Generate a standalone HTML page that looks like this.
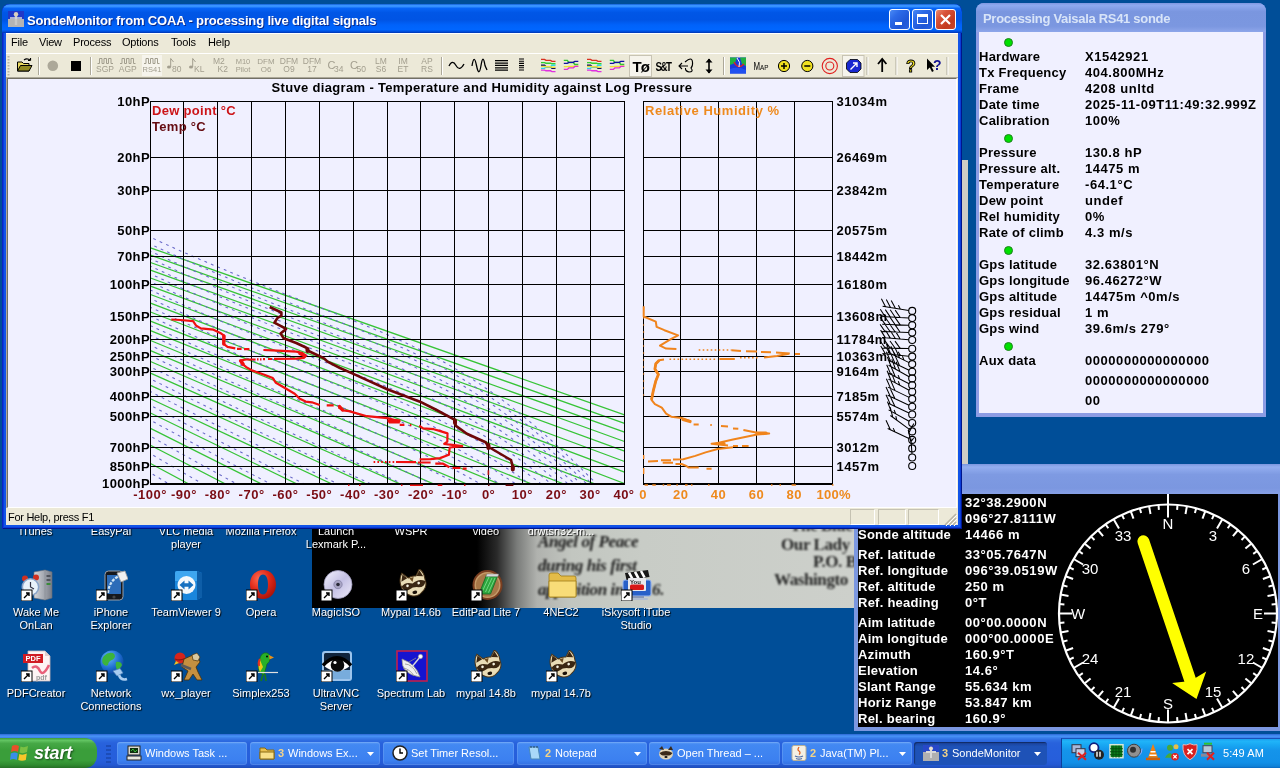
<!DOCTYPE html>
<html><head><meta charset="utf-8"><title>SondeMonitor</title>
<style>
*{box-sizing:border-box;margin:0;padding:0}
html,body{width:1280px;height:768px;overflow:hidden;background:#004e98;font-family:"Liberation Sans",sans-serif;}
.abs{position:absolute}
#desk{position:absolute;left:0;top:0;width:1280px;height:768px;overflow:hidden;background:#004e98;will-change:transform;-webkit-font-smoothing:antialiased}
.b13{font-weight:bold;font-size:13px;line-height:16px;white-space:nowrap}
/* main window */
#mw{position:absolute;left:2px;top:4px;width:960px;height:525px;background:#1254e8;border-radius:8px 8px 0 0;overflow:hidden;box-shadow:inset 1px 0 0 #0a26c2,inset -1px -1px 0 #00168c,inset 2px 0 0 #0a3cdc,inset -2px -2px 0 #0a3cd8}
#mw .tb{position:absolute;left:0;top:0;width:960px;height:29px;border-radius:8px 8px 0 0;
 background:linear-gradient(to bottom,#0a54cc 0%,#3a94ff 4%,#3490ff 9%,#0764f6 15%,#0056e6 30%,#0054e4 55%,#0062fa 72%,#0066ff 88%,#0052e2 94%,#0034b0 100%)}
#mw .ttl{position:absolute;left:25px;top:8px;color:#fff;font-weight:bold;font-size:13px;line-height:17px;white-space:nowrap;letter-spacing:-0.15px;text-shadow:1px 1px 0 #0a2a8c}
.cb{position:absolute;top:5px;width:21px;height:21px;border:1px solid #fff;border-radius:3px;
 background:linear-gradient(135deg,#4a8af5 0%,#2c6ae8 30%,#1f56d6 70%,#2a62e0 100%)}
.cb.x{background:linear-gradient(135deg,#ec8a6e 0%,#d9533a 30%,#c33a1f 70%,#c9462c 100%)}
#menu{position:absolute;left:4px;top:29px;width:952px;height:20px;background:#ece9d8;border-top:1px solid #fff;font-size:11px;line-height:14px}
#menu span{position:absolute;top:1px;color:#000;letter-spacing:-0.2px}
#tbar{position:absolute;left:4px;top:49px;width:952px;height:24px;background:#ece9d8;border-top:1px solid #fff}
#client{position:absolute;left:5px;top:74px;width:950px;height:430px;background:#f0f0ff;overflow:hidden;border:1px solid;border-color:#716f64 #fff #fff #716f64}
#cedge{position:absolute;left:4px;top:73px;width:952px;height:431px;background:#f1efe2;border-top:1px solid #aca899;border-left:1px solid #aca899}
#status{position:absolute;left:4px;top:504px;width:952px;height:17px;background:#ece9d8;font-size:11px;line-height:14px;letter-spacing:-0.28px}
/* right panel */
#rp{position:absolute;left:976px;top:3px;width:290px;height:414px;background:#8c9ce4;border-radius:8px 8px 0 0;overflow:hidden}
#rp .tb{position:absolute;left:0;top:0;width:290px;height:29px;background:linear-gradient(to bottom,#7f97e0 0%,#8faaf0 8%,#7a96df 30%,#7b97e0 80%,#8ea6ea 100%)}
#rp .ttl{position:absolute;left:7px;top:7px;color:#d8e4f8;font-weight:bold;font-size:13px;line-height:17px;white-space:nowrap;letter-spacing:-0.3px}
#rp .body{position:absolute;left:3px;top:29px;width:284px;height:381px;background:#f0f0ff}
.dot{position:absolute;width:9px;height:9px;border-radius:50%;background:#00e000;border:1px solid #208020}
/* compass window */
#cw{position:absolute;left:854px;top:464px;width:428px;height:267px;background:#7b97e0}
#cw .tb{position:absolute;left:0;top:0;width:440px;height:30px;background:linear-gradient(to bottom,#7a96df 0%,#93aef0 10%,#7e9ae2 35%,#7b97e0 80%,#86a0e6 100%)}
#cw .body{position:absolute;left:4px;top:30px;width:420px;height:233px;background:#000;overflow:hidden}
/* taskbar */
#task{position:absolute;left:0;top:734px;width:1280px;height:34px;
 background:linear-gradient(to bottom,#2a62cc 0px,#3c82ec 1px,#4690f4 2.5px,#3a7eea 4px,#2f6ee2 6px,#2862dc 9px,#2660dc 14px,#265edb 26px,#2358d2 31px,#1e4cb8 34px)}
.tbn{position:absolute;top:8px;height:23px;border-radius:3px;background:linear-gradient(to bottom,#5c9cf6 0%,#4288f2 12%,#3c80f0 80%,#3470e2 100%);box-shadow:inset 0 0 0 1px rgba(255,255,255,.12);color:#fff;font-size:11px;line-height:23px;white-space:nowrap;overflow:hidden}
.tbn.act{background:linear-gradient(to bottom,#183f96 0%,#1e52b7 20%,#1e52b7 100%);box-shadow:inset 1px 1px 1px rgba(0,0,0,.35)}
#tray{position:absolute;left:1061px;top:4px;width:219px;height:30px;border-left:1px solid #0c3f9c;border-top:1px solid #1a50b8;
 background:linear-gradient(to bottom,#1a9ef0 0%,#20b4f8 8%,#18a6f2 22%,#1494ea 40%,#1290e8 80%,#0f82d8 94%,#0b68c0 100%)}
#start{position:absolute;left:0;top:4px;width:97px;height:30px;border-radius:0 12px 12px 0;
 background:linear-gradient(to bottom,#3a9a3a 0%,#62c462 8%,#46a846 18%,#3a9e3a 40%,#3a9e3a 75%,#2f8a2f 90%,#256f25 100%)}
.ico{position:absolute;color:#fff;font-size:11px;line-height:13px;text-align:center;width:80px;text-shadow:1px 1px 1px #000}
</style></head>
<body>
<div id="desk">
<div class="abs" style="left:312px;top:500px;width:542px;height:108px;background:linear-gradient(to right,#000 0px,#000 165px,#2a2a2a 185px,#7a7c7a 205px,#b0b2ae 225px,#c2c6c0 260px,#c8ccc6 330px,#cdd0cb 542px)"></div>
<div class="abs" style="left:538px;top:533px;font-family:'Liberation Serif',serif;font-size:17px;line-height:17px;font-weight:bold;font-style:italic;color:#111;opacity:0.92;filter:blur(1.3px);white-space:nowrap;letter-spacing:-0.4px">Angel of Peace</div>
<div class="abs" style="left:538px;top:557px;font-family:'Liberation Serif',serif;font-size:17px;line-height:17px;font-weight:bold;font-style:italic;color:#111;opacity:0.92;filter:blur(1.3px);white-space:nowrap;letter-spacing:-0.4px">during his first</div>
<div class="abs" style="left:538px;top:581px;font-family:'Liberation Serif',serif;font-size:17px;line-height:17px;font-weight:bold;font-style:italic;color:#111;opacity:0.92;filter:blur(1.3px);white-space:nowrap;letter-spacing:-0.4px">apparition in 1916.</div>
<div class="abs" style="left:790px;top:517px;font-family:'Liberation Serif',serif;font-size:17px;line-height:17px;font-weight:bold;font-style:normal;color:#111;opacity:0.85;filter:blur(1.2px);white-space:nowrap;letter-spacing:-0.4px">The Blue Army</div>
<div class="abs" style="left:781px;top:536px;font-family:'Liberation Serif',serif;font-size:17px;line-height:17px;font-weight:bold;font-style:normal;color:#111;opacity:0.90;filter:blur(1.1px);white-space:nowrap;letter-spacing:-0.4px">Our Lady</div>
<div class="abs" style="left:813px;top:553px;font-family:'Liberation Serif',serif;font-size:17px;line-height:17px;font-weight:bold;font-style:normal;color:#111;opacity:0.90;filter:blur(1.1px);white-space:nowrap;letter-spacing:-0.4px">P.O. B</div>
<div class="abs" style="left:774px;top:571px;font-family:'Liberation Serif',serif;font-size:17px;line-height:17px;font-weight:bold;font-style:normal;color:#111;opacity:0.90;filter:blur(1.1px);white-space:nowrap;letter-spacing:-0.4px">Washingto</div>
<div class="abs" style="left:21px;top:569px;width:32px;height:32px"><svg width="32" height="32" viewBox="0 0 32 32"><defs><linearGradient id="twr" x1="0" x2="1"><stop offset="0" stop-color="#d4d6da"/><stop offset=".55" stop-color="#a4a8b0"/><stop offset="1" stop-color="#787c86"/></linearGradient></defs><path d="M13 3L24 1L31 3V29L24 31L13 29Z" fill="url(#twr)" stroke="#6a6e78" stroke-width=".6"/><path d="M24 1V31" stroke="#8c9098" stroke-width=".8"/><rect x="25.5" y="6" width="4" height="2" fill="#50545c"/><rect x="25.5" y="10" width="4" height="2" fill="#50545c"/><rect x="25.5" y="14" width="4" height="2" fill="#3a8a3a"/><circle cx="4" cy="9.5" r="3" fill="#d03020"/><circle cx="15" cy="8.5" r="3" fill="#d03020"/><circle cx="9.5" cy="18" r="9" fill="#8aa4c8"/><circle cx="9.5" cy="18" r="7.4" fill="#e8f2fa"/><path d="M9.5 13V18L13 20" stroke="#334" stroke-width="1.2" fill="none"/><rect x="0" y="21" width="11" height="11" fill="#fff" stroke="#000" stroke-width="1"/><path d="M3 29L8 24M5 24H8V27" stroke="#000" stroke-width="1.4" fill="none"/></svg></div><div class="ico" style="left:-4px;top:606px">Wake Me<br>OnLan</div>
<div class="abs" style="left:96px;top:569px;width:32px;height:32px"><svg width="32" height="32" viewBox="0 0 32 32"><rect x="9" y="2" width="18" height="29" rx="3.5" fill="#16181c" stroke="#9a9ea6" stroke-width="1"/><rect x="11" y="6" width="14" height="19" fill="#2c6cb8"/><path d="M12 24Q13 12 23 7" stroke="#cfe4f4" stroke-width="2.2" fill="none" stroke-dasharray="3 1.2"/><circle cx="18" cy="28" r="1.6" fill="#444"/><path d="M21 4L29 2L32 10L25 13Z" fill="#f0f0f0" stroke="#a0a0a0" stroke-width=".8"/><rect x="0" y="21" width="11" height="11" fill="#fff" stroke="#000" stroke-width="1"/><path d="M3 29L8 24M5 24H8V27" stroke="#000" stroke-width="1.4" fill="none"/></svg></div><div class="ico" style="left:71px;top:606px">iPhone<br>Explorer</div>
<div class="abs" style="left:171px;top:569px;width:32px;height:32px"><svg width="32" height="32" viewBox="0 0 32 32"><path d="M6 2H26L31 4V28L26 31H6Q4 31 4 29V4Q4 2 6 2Z" fill="#1a86dc"/><path d="M26 2L31 4V28L26 31Z" fill="#0e5ea8"/><path d="M6 2H26V12H4V4Q4 2 6 2Z" fill="#3ea6f0"/><circle cx="15.5" cy="16" r="9" fill="#f4f8fc"/><path d="M8.5 16L13.5 11.5V14.3H17.5V11.5L22.5 16L17.5 20.5V17.7H13.5V20.5Z" fill="#1670c0"/><rect x="0" y="21" width="11" height="11" fill="#fff" stroke="#000" stroke-width="1"/><path d="M3 29L8 24M5 24H8V27" stroke="#000" stroke-width="1.4" fill="none"/></svg></div><div class="ico" style="left:146px;top:606px">TeamViewer 9</div>
<div class="abs" style="left:246px;top:569px;width:32px;height:32px"><svg width="32" height="32" viewBox="0 0 32 32"><defs><radialGradient id="opr" cx=".35" cy=".3" r=".8"><stop offset="0" stop-color="#ff6a50"/><stop offset=".5" stop-color="#e02818"/><stop offset="1" stop-color="#a01008"/></radialGradient></defs><path fill-rule="evenodd" fill="url(#opr)" d="M17 1C24.5 1 30 7 30 15.5S24.5 30 17 30S4 24 4 15.5S9.500 1 17 1ZM17 5.500C13.500 5.500 12 10 12 15.500S13.500 25.500 17 25.500S22 21 22 15.500S20.500 5.500 17 5.500Z"/><rect x="0" y="21" width="11" height="11" fill="#fff" stroke="#000" stroke-width="1"/><path d="M3 29L8 24M5 24H8V27" stroke="#000" stroke-width="1.4" fill="none"/></svg></div><div class="ico" style="left:221px;top:606px">Opera</div>
<div class="abs" style="left:321px;top:569px;width:32px;height:32px"><svg width="32" height="32" viewBox="0 0 32 32"><defs><linearGradient id="cdg" x1="0" y1="0" x2="1" y2="1"><stop offset="0" stop-color="#f4f4ff"/><stop offset=".5" stop-color="#c4c0e4"/><stop offset="1" stop-color="#eceaf8"/></linearGradient></defs><circle cx="17" cy="15.500" r="14" fill="url(#cdg)" stroke="#9c98b8" stroke-width=".8"/><circle cx="17" cy="15.500" r="4.200" fill="#a8a4c4" stroke="#77759a" stroke-width=".6"/><circle cx="17" cy="15.500" r="1.800" fill="#282838"/><rect x="0" y="21" width="11" height="11" fill="#fff" stroke="#000" stroke-width="1"/><path d="M3 29L8 24M5 24H8V27" stroke="#000" stroke-width="1.4" fill="none"/></svg></div><div class="ico" style="left:296px;top:606px">MagicISO</div>
<div class="abs" style="left:396px;top:569px;width:32px;height:32px"><svg width="32" height="32" viewBox="0 0 32 32"><g transform="rotate(-14 17 16)"><path d="M5 13Q5 6 9 2L14 8Q18 6.5 22 8L27 2Q31 6 30 14Q31 21 24 25Q19 29 13 26Q5 22 5 13Z" fill="#e9dcb6" stroke="#4a3418" stroke-width="1"/><path d="M6.5 10L9.3 3.2L13 8Z" fill="#3a2612"/><path d="M22.5 8L26.8 3.2L29 10Z" fill="#3a2612"/><path d="M5.5 15Q10 10.5 17 14.5Q24 10.5 30 15Q28 21 22 19.5Q17 17.5 12.5 19.5Q7 21 5.5 15Z" fill="#3a2612"/><path d="M15 8.5L17.3 13L19.5 8.5Z" fill="#6a4a22"/><circle cx="11.5" cy="15.5" r="1.3" fill="#f4f0e0"/><circle cx="23" cy="15.5" r="1.3" fill="#f4f0e0"/><ellipse cx="17" cy="23.5" rx="2.4" ry="1.7" fill="#1a1008"/></g><rect x="0" y="21" width="11" height="11" fill="#fff" stroke="#000" stroke-width="1"/><path d="M3 29L8 24M5 24H8V27" stroke="#000" stroke-width="1.4" fill="none"/></svg></div><div class="ico" style="left:371px;top:606px">Mypal 14.6b</div>
<div class="abs" style="left:471px;top:569px;width:32px;height:32px"><svg width="32" height="32" viewBox="0 0 32 32"><circle cx="16.500" cy="16" r="15" fill="#7a3e20"/><circle cx="16.500" cy="16" r="13" fill="#c49a68"/><circle cx="16.500" cy="16" r="11.500" fill="#a87848"/><path d="M8 25L15.500 6H27L19.500 25Z" fill="#2ea63e" stroke="#146424" stroke-width=".8"/><path d="M16 5L27.500 5L27 7.500H15Z" fill="#d8d8d8" stroke="#888" stroke-width=".5"/><path d="M11.500 22L18 8M14.500 23L21 9M17.500 23.500L24 9" stroke="#7adc8a" stroke-width=".9"/><rect x="0" y="21" width="11" height="11" fill="#fff" stroke="#000" stroke-width="1"/><path d="M3 29L8 24M5 24H8V27" stroke="#000" stroke-width="1.4" fill="none"/></svg></div><div class="ico" style="left:446px;top:606px">EditPad Lite 7</div>
<div class="abs" style="left:546px;top:569px;width:32px;height:32px"><svg width="32" height="32" viewBox="0 0 32 32"><path d="M3 6Q3 4 5 4H12L15 7H28Q30 7 30 9V27Q30 28 29 28H4Q3 28 3 27Z" fill="#e4bc48" stroke="#a07c18" stroke-width=".8"/><path d="M3 12H30V27Q30 28 29 28H4Q3 28 3 27Z" fill="#f8dc78" stroke="#a07c18" stroke-width=".8"/></svg></div><div class="ico" style="left:521px;top:606px">4NEC2</div>
<div class="abs" style="left:621px;top:569px;width:32px;height:32px"><svg width="32" height="32" viewBox="0 0 32 32"><rect x="2" y="11" width="28" height="16" rx="2" fill="#2860c8" stroke="#9ab8f0" stroke-width="1"/><rect x="9" y="27" width="14" height="2" fill="#8898b8"/><rect x="5" y="29" width="22" height="2" rx="1" fill="#b0bcd0"/><path d="M4 4L27 1L28.500 8L5.500 11Z" fill="#181818"/><path d="M8 3.500L11.500 10M14 2.800L17.500 9.300M20 2L23.500 8.500" stroke="#fff" stroke-width="2.600"/><rect x="7" y="9" width="18" height="13" rx="1" fill="#e8e8ec"/><text x="9" y="14.500" font-size="6" font-weight="bold" fill="#222" font-family='"Liberation Sans",sans-serif'>You</text><rect x="9" y="15.500" width="14" height="5.500" rx="1.500" fill="#d81818"/><rect x="0" y="21" width="11" height="11" fill="#fff" stroke="#000" stroke-width="1"/><path d="M3 29L8 24M5 24H8V27" stroke="#000" stroke-width="1.4" fill="none"/></svg></div><div class="ico" style="left:596px;top:606px">iSkysoft iTube<br>Studio</div>
<div class="abs" style="left:21px;top:650px;width:32px;height:32px"><svg width="32" height="32" viewBox="0 0 32 32"><path d="M7 1H24L29 6V31H7Z" fill="#fdf4f4" stroke="#c8b8b8" stroke-width=".8"/><path d="M24 1V6H29Z" fill="#e0d0d0"/><rect x="2" y="4" width="20" height="9" fill="#d01c24"/><text x="4.500" y="11.300" font-size="7.500" font-weight="bold" fill="#fff" font-family='"Liberation Sans",sans-serif'>PDF</text><path d="M11 18Q16 14 19 21Q22 27 28 15" stroke="#e8607a" stroke-width="2.600" fill="none"/><text x="15" y="30" font-size="7" font-weight="bold" fill="#9a9a9a" font-family='"Liberation Sans",sans-serif'>pdf</text><rect x="0" y="21" width="11" height="11" fill="#fff" stroke="#000" stroke-width="1"/><path d="M3 29L8 24M5 24H8V27" stroke="#000" stroke-width="1.4" fill="none"/></svg></div><div class="ico" style="left:-4px;top:687px">PDFCreator</div>
<div class="abs" style="left:96px;top:650px;width:32px;height:32px"><svg width="32" height="32" viewBox="0 0 32 32"><defs><radialGradient id="glb" cx=".35" cy=".3" r=".8"><stop offset="0" stop-color="#6ab8f8"/><stop offset=".6" stop-color="#1c6cd0"/><stop offset="1" stop-color="#0c3c90"/></radialGradient></defs><circle cx="16" cy="12" r="11.500" fill="url(#glb)"/><path d="M8 6Q12 1.500 17 3Q21 6 17 9.500Q12 11 12 15Q9 17 6.500 13Q5.500 9 8 6Z" fill="#3cb43c"/><path d="M20 12Q25 11 26 15Q24 20 20.500 19Q19 15 20 12Z" fill="#3cb43c"/><path d="M17 21L24 18.500L27 23L21 26Z" fill="#a8ccf0" stroke="#5888c0" stroke-width=".7"/><path d="M23 25Q25 31 31 29" stroke="#a8ccf0" stroke-width="2.600" fill="none"/><rect x="0" y="21" width="11" height="11" fill="#fff" stroke="#000" stroke-width="1"/><path d="M3 29L8 24M5 24H8V27" stroke="#000" stroke-width="1.4" fill="none"/></svg></div><div class="ico" style="left:71px;top:687px">Network<br>Connections</div>
<div class="abs" style="left:171px;top:650px;width:32px;height:32px"><svg width="32" height="32" viewBox="0 0 32 32"><circle cx="9" cy="8" r="5.500" fill="#d4241c"/><path d="M4 9Q9 11 14 8.500" stroke="#8a1410" stroke-width="1.200" fill="none"/><path d="M5 11L3 15L8 13Z" fill="#f0c020"/><path d="M13 9L22 5L27 7L29 12L25 17L27 22L31 30H26L22 24L18 30H13L17 21L11 17Z" fill="#c49040" stroke="#4a3008" stroke-width=".8"/><path d="M21 5L26 3L29 7L27 11L22 10Z" fill="#d8c8a0" stroke="#4a3008" stroke-width=".7"/><path d="M10 15L20 19" stroke="#5a5a5a" stroke-width="2.600"/><rect x="0" y="21" width="11" height="11" fill="#fff" stroke="#000" stroke-width="1"/><path d="M3 29L8 24M5 24H8V27" stroke="#000" stroke-width="1.4" fill="none"/></svg></div><div class="ico" style="left:146px;top:687px">wx_player</div>
<div class="abs" style="left:246px;top:650px;width:32px;height:32px"><svg width="32" height="32" viewBox="0 0 32 32"><path d="M18 3Q24 2 24 8Q24 12 21 14L18 25L13 22Q11 14 14 8Q15 4 18 3Z" fill="#28b028" stroke="#106010" stroke-width=".6"/><path d="M14 10Q11 16 14 22L17 17Z" fill="#e8c818"/><path d="M14 9Q12 12 13 16" stroke="#e03020" stroke-width="2" fill="none"/><path d="M23 5L28 7.500L23.500 9.500Z" fill="#e89018"/><circle cx="21" cy="6.500" r="1" fill="#000"/><path d="M17 24L15 31M19 24L20 31" stroke="#1a7a1a" stroke-width="1.600"/><path d="M12 22.500H32" stroke="#e0e0e0" stroke-width="1.200"/><rect x="0" y="21" width="11" height="11" fill="#fff" stroke="#000" stroke-width="1"/><path d="M3 29L8 24M5 24H8V27" stroke="#000" stroke-width="1.4" fill="none"/></svg></div><div class="ico" style="left:221px;top:687px">Simplex253</div>
<div class="abs" style="left:321px;top:650px;width:32px;height:32px"><svg width="32" height="32" viewBox="0 0 32 32"><rect x="1" y="1" width="30" height="30" rx="3" fill="#9cc4ec"/><rect x="3" y="3" width="26" height="26" rx="1.500" fill="#10243c"/><rect x="3" y="20" width="26" height="9" fill="#78acdc"/><path d="M2.500 15.500Q16 2 29.500 15.500Q16 27 2.500 15.500Z" fill="#fff"/><circle cx="16.500" cy="15" r="6.800" fill="#0a0a0a"/><circle cx="14" cy="12.500" r="1.600" fill="#fff"/><path d="M2 15.500Q16 0 30 15.500" stroke="#000" stroke-width="3.400" fill="none"/><rect x="0" y="21" width="11" height="11" fill="#fff" stroke="#000" stroke-width="1"/><path d="M3 29L8 24M5 24H8V27" stroke="#000" stroke-width="1.4" fill="none"/></svg></div><div class="ico" style="left:296px;top:687px">UltraVNC<br>Server</div>
<div class="abs" style="left:396px;top:650px;width:32px;height:32px"><svg width="32" height="32" viewBox="0 0 32 32"><rect x="1" y="1" width="30" height="30" fill="#1414d0" stroke="#c0204c" stroke-width="1.600"/><path d="M6 9Q5 24 24 27Q20 14 6 9Z" fill="#f0f0f0" stroke="#909090" stroke-width=".8"/><path d="M9 14Q16 14 21 24M7 18Q14 19 18 26M13 12L20 8" stroke="#909090" stroke-width=".8" fill="none"/><path d="M15 18L24 7" stroke="#d8d8d8" stroke-width="1.400"/><circle cx="24.500" cy="6.500" r="2.200" fill="#fff" stroke="#888" stroke-width=".6"/><rect x="0" y="21" width="11" height="11" fill="#fff" stroke="#000" stroke-width="1"/><path d="M3 29L8 24M5 24H8V27" stroke="#000" stroke-width="1.4" fill="none"/></svg></div><div class="ico" style="left:371px;top:687px">Spectrum Lab</div>
<div class="abs" style="left:471px;top:650px;width:32px;height:32px"><svg width="32" height="32" viewBox="0 0 32 32"><g transform="rotate(-14 17 16)"><path d="M5 13Q5 6 9 2L14 8Q18 6.5 22 8L27 2Q31 6 30 14Q31 21 24 25Q19 29 13 26Q5 22 5 13Z" fill="#e9dcb6" stroke="#4a3418" stroke-width="1"/><path d="M6.5 10L9.3 3.2L13 8Z" fill="#3a2612"/><path d="M22.5 8L26.8 3.2L29 10Z" fill="#3a2612"/><path d="M5.5 15Q10 10.5 17 14.5Q24 10.5 30 15Q28 21 22 19.5Q17 17.5 12.5 19.5Q7 21 5.5 15Z" fill="#3a2612"/><path d="M15 8.5L17.3 13L19.5 8.5Z" fill="#6a4a22"/><circle cx="11.5" cy="15.5" r="1.3" fill="#f4f0e0"/><circle cx="23" cy="15.5" r="1.3" fill="#f4f0e0"/><ellipse cx="17" cy="23.5" rx="2.4" ry="1.7" fill="#1a1008"/></g><rect x="0" y="21" width="11" height="11" fill="#fff" stroke="#000" stroke-width="1"/><path d="M3 29L8 24M5 24H8V27" stroke="#000" stroke-width="1.4" fill="none"/></svg></div><div class="ico" style="left:446px;top:687px">mypal 14.8b</div>
<div class="abs" style="left:546px;top:650px;width:32px;height:32px"><svg width="32" height="32" viewBox="0 0 32 32"><g transform="rotate(-14 17 16)"><path d="M5 13Q5 6 9 2L14 8Q18 6.5 22 8L27 2Q31 6 30 14Q31 21 24 25Q19 29 13 26Q5 22 5 13Z" fill="#e9dcb6" stroke="#4a3418" stroke-width="1"/><path d="M6.5 10L9.3 3.2L13 8Z" fill="#3a2612"/><path d="M22.5 8L26.8 3.2L29 10Z" fill="#3a2612"/><path d="M5.5 15Q10 10.5 17 14.5Q24 10.5 30 15Q28 21 22 19.5Q17 17.5 12.5 19.5Q7 21 5.5 15Z" fill="#3a2612"/><path d="M15 8.5L17.3 13L19.5 8.5Z" fill="#6a4a22"/><circle cx="11.5" cy="15.5" r="1.3" fill="#f4f0e0"/><circle cx="23" cy="15.5" r="1.3" fill="#f4f0e0"/><ellipse cx="17" cy="23.5" rx="2.4" ry="1.7" fill="#1a1008"/></g><rect x="0" y="21" width="11" height="11" fill="#fff" stroke="#000" stroke-width="1"/><path d="M3 29L8 24M5 24H8V27" stroke="#000" stroke-width="1.4" fill="none"/></svg></div><div class="ico" style="left:521px;top:687px">mypal 14.7b</div>
<div class="ico" style="left:-4px;top:525px">iTunes</div>
<div class="ico" style="left:71px;top:525px">EasyPal</div>
<div class="ico" style="left:146px;top:525px">VLC media<br>player</div>
<div class="ico" style="left:221px;top:525px">Mozilla Firefox</div>
<div class="ico" style="left:296px;top:525px">Launch<br>Lexmark P...</div>
<div class="ico" style="left:371px;top:525px">WSPR</div>
<div class="ico" style="left:446px;top:525px">video</div>
<div class="ico" style="left:521px;top:525px">drwtsn32-m...</div>
<div id="cw"><div class="tb"></div><div class="body">
<div class="abs b13" style="color:#fff;left:107px;top:1px;letter-spacing:0.55px">32&deg;38.2900N</div>
<div class="abs b13" style="color:#fff;left:107px;top:17px;letter-spacing:0.55px">096&deg;27.8111W</div>
<div class="abs b13" style="color:#fff;left:0px;top:33px;letter-spacing:0.25px">Sonde altitude</div><div class="abs b13" style="color:#fff;left:107px;top:33px;letter-spacing:0.55px">14466 m</div>
<div class="abs b13" style="color:#fff;left:0px;top:53px;letter-spacing:0.25px">Ref. latitude</div><div class="abs b13" style="color:#fff;left:107px;top:53px;letter-spacing:0.55px">33&deg;05.7647N</div>
<div class="abs b13" style="color:#fff;left:0px;top:69px;letter-spacing:0.25px">Ref. longitude</div><div class="abs b13" style="color:#fff;left:107px;top:69px;letter-spacing:0.55px">096&deg;39.0519W</div>
<div class="abs b13" style="color:#fff;left:0px;top:85px;letter-spacing:0.25px">Ref. altitude</div><div class="abs b13" style="color:#fff;left:107px;top:85px;letter-spacing:0.55px">250 m</div>
<div class="abs b13" style="color:#fff;left:0px;top:101px;letter-spacing:0.25px">Ref. heading</div><div class="abs b13" style="color:#fff;left:107px;top:101px;letter-spacing:0.55px">0&deg;T</div>
<div class="abs b13" style="color:#fff;left:0px;top:121px;letter-spacing:0.25px">Aim latitude</div><div class="abs b13" style="color:#fff;left:107px;top:121px;letter-spacing:0.55px">00&deg;00.0000N</div>
<div class="abs b13" style="color:#fff;left:0px;top:137px;letter-spacing:0.25px">Aim longitude</div><div class="abs b13" style="color:#fff;left:107px;top:137px;letter-spacing:0.55px">000&deg;00.0000E</div>
<div class="abs b13" style="color:#fff;left:0px;top:153px;letter-spacing:0.25px">Azimuth</div><div class="abs b13" style="color:#fff;left:107px;top:153px;letter-spacing:0.55px">160.9&deg;T</div>
<div class="abs b13" style="color:#fff;left:0px;top:169px;letter-spacing:0.25px">Elevation</div><div class="abs b13" style="color:#fff;left:107px;top:169px;letter-spacing:0.55px">14.6&deg;</div>
<div class="abs b13" style="color:#fff;left:0px;top:185px;letter-spacing:0.25px">Slant Range</div><div class="abs b13" style="color:#fff;left:107px;top:185px;letter-spacing:0.55px">55.634 km</div>
<div class="abs b13" style="color:#fff;left:0px;top:201px;letter-spacing:0.25px">Horiz Range</div><div class="abs b13" style="color:#fff;left:107px;top:201px;letter-spacing:0.55px">53.847 km</div>
<div class="abs b13" style="color:#fff;left:0px;top:217px;letter-spacing:0.25px">Rel. bearing</div><div class="abs b13" style="color:#fff;left:107px;top:217px;letter-spacing:0.55px">160.9&deg;</div>
<svg class="abs" style="left:0;top:0" width="436" height="233" viewBox="858 494 436 233"><circle cx="1168.0" cy="613.5" r="109.0" fill="none" stroke="#fff" stroke-width="2.2"/><path d="M1168.0 504.5L1168.0 517.5M1177.5 504.9L1177.1 509.9M1186.9 506.2L1185.5 514.0M1196.2 508.2L1194.9 513.0M1205.3 511.1L1202.5 518.6M1214.1 514.7L1212.0 519.2M1222.5 519.1L1217.0 528.6M1230.5 524.2L1227.7 528.3M1238.1 530.0L1232.9 536.1M1245.1 536.4L1241.5 540.0M1251.5 543.4L1245.4 548.6M1257.3 551.0L1253.2 553.8M1262.4 559.0L1252.9 564.5M1266.8 567.4L1262.3 569.5M1270.4 576.2L1262.9 579.0M1273.3 585.3L1268.5 586.6M1275.3 594.6L1267.5 596.0M1276.6 604.0L1271.6 604.4M1277.0 613.5L1264.0 613.5M1276.6 623.0L1271.6 622.6M1275.3 632.4L1267.5 631.0M1273.3 641.7L1268.5 640.4M1270.4 650.8L1262.9 648.0M1266.8 659.6L1262.3 657.5M1262.4 668.0L1252.9 662.5M1257.3 676.0L1253.2 673.2M1251.5 683.6L1245.4 678.4M1245.1 690.6L1241.5 687.0M1238.1 697.0L1232.9 690.9M1230.5 702.8L1227.7 698.7M1222.5 707.9L1217.0 698.4M1214.1 712.3L1212.0 707.8M1205.3 715.9L1202.5 708.4M1196.2 718.8L1194.9 714.0M1186.9 720.8L1185.5 713.0M1177.5 722.1L1177.1 717.1M1168.0 722.5L1168.0 709.5M1158.5 722.1L1158.9 717.1M1149.1 720.8L1150.5 713.0M1139.8 718.8L1141.1 714.0M1130.7 715.9L1133.5 708.4M1121.9 712.3L1124.0 707.8M1113.5 707.9L1119.0 698.4M1105.5 702.8L1108.3 698.7M1097.9 697.0L1103.1 690.9M1090.9 690.6L1094.5 687.0M1084.5 683.6L1090.6 678.4M1078.7 676.0L1082.8 673.2M1073.6 668.0L1083.1 662.5M1069.2 659.6L1073.7 657.5M1065.6 650.8L1073.1 648.0M1062.7 641.7L1067.5 640.4M1060.7 632.4L1068.5 631.0M1059.4 623.0L1064.4 622.6M1059.0 613.5L1072.0 613.5M1059.4 604.0L1064.4 604.4M1060.7 594.6L1068.5 596.0M1062.7 585.3L1067.5 586.6M1065.6 576.2L1073.1 579.0M1069.2 567.4L1073.7 569.5M1073.6 559.0L1083.1 564.5M1078.7 551.0L1082.8 553.8M1084.5 543.4L1090.6 548.6M1090.9 536.4L1094.5 540.0M1097.9 530.0L1103.1 536.1M1105.5 524.2L1108.3 528.3M1113.5 519.1L1119.0 528.6M1121.9 514.7L1124.0 519.2M1130.7 511.1L1133.5 518.6M1139.8 508.2L1141.1 513.0M1149.1 506.2L1150.5 514.0M1158.5 504.9L1158.9 509.9" stroke="#fff" stroke-width="2" fill="none"/><path d="M1168.0 494V504.5" stroke="#fff" stroke-width="2"/><text x="1168.0" y="528.8" fill="#fff" font-family='"Liberation Sans",sans-serif' font-size="15" text-anchor="middle">N</text><text x="1213.0" y="540.9" fill="#fff" font-family='"Liberation Sans",sans-serif' font-size="15" text-anchor="middle">3</text><text x="1245.9" y="573.8" fill="#fff" font-family='"Liberation Sans",sans-serif' font-size="15" text-anchor="middle">6</text><text x="1258.0" y="618.8" fill="#fff" font-family='"Liberation Sans",sans-serif' font-size="15" text-anchor="middle">E</text><text x="1245.9" y="663.8" fill="#fff" font-family='"Liberation Sans",sans-serif' font-size="15" text-anchor="middle">12</text><text x="1213.0" y="696.7" fill="#fff" font-family='"Liberation Sans",sans-serif' font-size="15" text-anchor="middle">15</text><text x="1168.0" y="708.8" fill="#fff" font-family='"Liberation Sans",sans-serif' font-size="15" text-anchor="middle">S</text><text x="1123.0" y="696.7" fill="#fff" font-family='"Liberation Sans",sans-serif' font-size="15" text-anchor="middle">21</text><text x="1090.1" y="663.8" fill="#fff" font-family='"Liberation Sans",sans-serif' font-size="15" text-anchor="middle">24</text><text x="1078.0" y="618.8" fill="#fff" font-family='"Liberation Sans",sans-serif' font-size="15" text-anchor="middle">W</text><text x="1090.1" y="573.8" fill="#fff" font-family='"Liberation Sans",sans-serif' font-size="15" text-anchor="middle">30</text><text x="1123.0" y="540.9" fill="#fff" font-family='"Liberation Sans",sans-serif' font-size="15" text-anchor="middle">33</text><path d="M1143.4 541.3L1191.7 684.7" stroke="#ffff00" stroke-width="12" stroke-linecap="round" fill="none"/><path d="M1196.5 698.9L1172.1 682.9L1190.4 680.9L1206.2 671.4Z" fill="#ffff00"/></svg></div></div>
<div class="abs" style="left:962px;top:160px;width:6px;height:304px;background:#cfcdc5"></div>
<div id="rp"><div class="tb"></div><div class="ttl">Processing Vaisala RS41 sonde</div><div class="body">
<div class="abs b13" style="left:0px;top:17px;letter-spacing:0.25px">Hardware</div><div class="abs b13" style="left:106px;top:17px;letter-spacing:0.55px">X1542921</div>
<div class="abs b13" style="left:0px;top:33px;letter-spacing:0.25px">Tx Frequency</div><div class="abs b13" style="left:106px;top:33px;letter-spacing:0.55px">404.800MHz</div>
<div class="abs b13" style="left:0px;top:49px;letter-spacing:0.25px">Frame</div><div class="abs b13" style="left:106px;top:49px;letter-spacing:0.55px">4208 unltd</div>
<div class="abs b13" style="left:0px;top:65px;letter-spacing:0.25px">Date time</div><div class="abs b13" style="left:106px;top:65px;letter-spacing:0.55px">2025-11-09T11:49:32.999Z</div>
<div class="abs b13" style="left:0px;top:81px;letter-spacing:0.25px">Calibration</div><div class="abs b13" style="left:106px;top:81px;letter-spacing:0.55px">100%</div>
<div class="abs b13" style="left:0px;top:113px;letter-spacing:0.25px">Pressure</div><div class="abs b13" style="left:106px;top:113px;letter-spacing:0.55px">130.8 hP</div>
<div class="abs b13" style="left:0px;top:129px;letter-spacing:0.25px">Pressure alt.</div><div class="abs b13" style="left:106px;top:129px;letter-spacing:0.55px">14475 m</div>
<div class="abs b13" style="left:0px;top:145px;letter-spacing:0.25px">Temperature</div><div class="abs b13" style="left:106px;top:145px;letter-spacing:0.55px">-64.1&deg;C</div>
<div class="abs b13" style="left:0px;top:161px;letter-spacing:0.25px">Dew point</div><div class="abs b13" style="left:106px;top:161px;letter-spacing:0.55px">undef</div>
<div class="abs b13" style="left:0px;top:177px;letter-spacing:0.25px">Rel humidity</div><div class="abs b13" style="left:106px;top:177px;letter-spacing:0.55px">0%</div>
<div class="abs b13" style="left:0px;top:193px;letter-spacing:0.25px">Rate of climb</div><div class="abs b13" style="left:106px;top:193px;letter-spacing:0.55px">4.3 m/s</div>
<div class="abs b13" style="left:0px;top:225px;letter-spacing:0.25px">Gps latitude</div><div class="abs b13" style="left:106px;top:225px;letter-spacing:0.55px">32.63801&deg;N</div>
<div class="abs b13" style="left:0px;top:241px;letter-spacing:0.25px">Gps longitude</div><div class="abs b13" style="left:106px;top:241px;letter-spacing:0.55px">96.46272&deg;W</div>
<div class="abs b13" style="left:0px;top:257px;letter-spacing:0.25px">Gps altitude</div><div class="abs b13" style="left:106px;top:257px;letter-spacing:0.55px">14475m ^0m/s</div>
<div class="abs b13" style="left:0px;top:273px;letter-spacing:0.25px">Gps residual</div><div class="abs b13" style="left:106px;top:273px;letter-spacing:0.55px">1 m</div>
<div class="abs b13" style="left:0px;top:289px;letter-spacing:0.25px">Gps wind</div><div class="abs b13" style="left:106px;top:289px;letter-spacing:0.55px">39.6m/s 279&deg;</div>
<div class="abs b13" style="left:0px;top:321px;letter-spacing:0.25px">Aux data</div><div class="abs b13" style="left:106px;top:321px;letter-spacing:0.55px">0000000000000000</div>
<div class="abs b13" style="left:106px;top:341px;letter-spacing:0.55px">0000000000000000</div>
<div class="abs b13" style="left:106px;top:361px;letter-spacing:0.55px">00</div>
<div class="dot" style="left:25px;top:6px"></div><div class="dot" style="left:25px;top:102px"></div><div class="dot" style="left:25px;top:214px"></div><div class="dot" style="left:25px;top:310px"></div></div></div>
<div id="mw"><div class="tb"></div>
<svg class="abs" style="left:6px;top:7px" width="16" height="16" viewBox="0 0 16 16"><rect width="16" height="8" fill="#2038c8"/><rect y="8" width="16" height="8" fill="#b4b4b4"/><path d="M8 3V14" stroke="#c8c8c8" stroke-width="2.4"/><path d="M2 7H14" stroke="#d8d8d8" stroke-width="1.6"/><circle cx="8" cy="3.2" r="2.2" fill="#d8d0c0"/></svg><div class="ttl">SondeMonitor from COAA - processing live digital signals</div>
<div class="cb" style="left:887px"><div class="abs" style="left:5px;top:12px;width:7px;height:3px;background:#fff"></div></div><div class="cb" style="left:910px"><div class="abs" style="left:4px;top:4px;width:11px;height:10px;border:1px solid #fff;border-top-width:3px"></div></div><div class="cb x" style="left:933px"><svg class="abs" style="left:0;top:0" width="19" height="19"><path d="M5 5L14 14M14 5L5 14" stroke="#fff" stroke-width="2.2"/></svg></div>
<div id="menu"><span style="left:5px">File</span><span style="left:33px">View</span><span style="left:67px">Process</span><span style="left:116px">Options</span><span style="left:165px">Tools</span><span style="left:202px">Help</span></div>
<div id="tbar"><svg class="abs" style="left:0;top:-1px" width="952" height="25" viewBox="6 53 952 25" font-family='"Liberation Sans",sans-serif'><path d="M8.5 56V76" stroke="#b8b4a4" stroke-width="2" stroke-dasharray="1.5 1.5"/><path d="M38.5 57V75" stroke="#aca899" stroke-width="1"/><path d="M39.5 57V75" stroke="#fff" stroke-width="1"/><path d="M90.5 57V75" stroke="#aca899" stroke-width="1"/><path d="M91.5 57V75" stroke="#fff" stroke-width="1"/><path d="M441.5 57V75" stroke="#aca899" stroke-width="1"/><path d="M442.5 57V75" stroke="#fff" stroke-width="1"/><path d="M723.5 57V75" stroke="#aca899" stroke-width="1"/><path d="M724.5 57V75" stroke="#fff" stroke-width="1"/><path d="M867.0 57V75" stroke="#aca899" stroke-width="1"/><path d="M868.0 57V75" stroke="#fff" stroke-width="1"/><path d="M896.0 57V75" stroke="#aca899" stroke-width="1"/><path d="M897.0 57V75" stroke="#fff" stroke-width="1"/><path d="M947.0 57V75" stroke="#aca899" stroke-width="1"/><path d="M948.0 57V75" stroke="#fff" stroke-width="1"/><path d="M17.5 62H22L23.5 63.5H29V71H17.5Z" fill="#e8d860" stroke="#000" stroke-width="1"/><path d="M17.5 71L20.5 65.5H32L29 71Z" fill="#908820" stroke="#000" stroke-width="1"/><path d="M24 60Q27 57.5 30.5 60.5M30.5 60.5V58M30.5 60.5H28" stroke="#000" fill="none" stroke-width="1.2"/><circle cx="52.8" cy="65.8" r="5.3" fill="#aca899"/><rect x="71" y="61" width="10" height="10" fill="#000"/><rect x="142" y="55" width="20" height="21" fill="#f6f4ec"/><path d="M97.5 63.5H99.5V58.5H102.0V63.5H104.0V58.5H106.5V63.5H108.5V58.5H111.0V63.5H113.0" fill="none" stroke="#a29e8e" stroke-width="1"/><text x="105.0" y="71.8" font-size="8.5" text-anchor="middle" fill="#a29e8e" letter-spacing="0.0">SGP</text><path d="M120.0 63.5H122.0V58.5H124.5V63.5H126.5V58.5H129.0V63.5H131.0V58.5H133.5V63.5H135.5" fill="none" stroke="#a29e8e" stroke-width="1"/><text x="127.7" y="71.8" font-size="8.5" text-anchor="middle" fill="#a29e8e" letter-spacing="0.0">AGP</text><path d="M144.0 63.5H146.0V58.5H148.5V63.5H150.5V58.5H153.0V63.5H155.0V58.5H157.5V63.5H159.5" fill="none" stroke="#a29e8e" stroke-width="1"/><text x="152.0" y="71.8" font-size="7.5" text-anchor="middle" fill="#a29e8e" letter-spacing="0.0">RS41</text><ellipse cx="169.0" cy="67" rx="2" ry="1.6" fill="#a29e8e"/><path d="M170.7 67V58.5L173.5 62" stroke="#a29e8e" fill="none"/><text x="172.0" y="71.8" font-size="8.5" fill="#a29e8e">80</text><ellipse cx="191.0" cy="67" rx="2" ry="1.6" fill="#a29e8e"/><path d="M192.7 67V58.5L195.5 62" stroke="#a29e8e" fill="none"/><text x="194.0" y="71.8" font-size="8.5" fill="#a29e8e">KL</text><text x="213" y="63.8" font-size="8.5" fill="#a29e8e">M2</text><text x="217.5" y="71.8" font-size="8.5" fill="#a29e8e">K2</text><text x="243.0" y="63.8" font-size="7.5" text-anchor="middle" fill="#a29e8e" letter-spacing="0.0">M10</text><text x="243.0" y="71.8" font-size="7.5" text-anchor="middle" fill="#a29e8e" letter-spacing="0.0">Pilot</text><text x="266.0" y="63.8" font-size="8.0" text-anchor="middle" fill="#a29e8e" letter-spacing="0.0">DFM</text><text x="266.0" y="71.8" font-size="8.0" text-anchor="middle" fill="#a29e8e" letter-spacing="0.0">O6</text><text x="289.0" y="63.8" font-size="8.5" text-anchor="middle" fill="#a29e8e" letter-spacing="0.0">DFM</text><text x="289.0" y="71.8" font-size="8.5" text-anchor="middle" fill="#a29e8e" letter-spacing="0.0">O9</text><text x="312.0" y="63.8" font-size="8.5" text-anchor="middle" fill="#a29e8e" letter-spacing="0.0">DFM</text><text x="312.0" y="71.8" font-size="8.5" text-anchor="middle" fill="#a29e8e" letter-spacing="0.0">17</text><text x="327.5" y="69" font-size="11" fill="#a29e8e">C</text><text x="334" y="72" font-size="8.5" fill="#a29e8e">34</text><text x="350" y="69" font-size="11" fill="#a29e8e">C</text><text x="356.5" y="72" font-size="8.5" fill="#a29e8e">50</text><text x="381.0" y="63.8" font-size="8.5" text-anchor="middle" fill="#a29e8e" letter-spacing="0.0">LM</text><text x="381.0" y="71.8" font-size="8.5" text-anchor="middle" fill="#a29e8e" letter-spacing="0.0">S6</text><text x="403.0" y="63.8" font-size="8.5" text-anchor="middle" fill="#a29e8e" letter-spacing="0.0">IM</text><text x="403.0" y="71.8" font-size="8.5" text-anchor="middle" fill="#a29e8e" letter-spacing="0.0">ET</text><text x="427.0" y="63.8" font-size="8.5" text-anchor="middle" fill="#a29e8e" letter-spacing="0.0">AP</text><text x="427.0" y="71.8" font-size="8.5" text-anchor="middle" fill="#a29e8e" letter-spacing="0.0">RS</text><path d="M449 66Q452.5 59 456 65.5T464 64" fill="none" stroke="#000" stroke-width="1.3"/><path d="M472 66Q474 53 476.5 65.5T481 65.5T485 65.5L487 70" fill="none" stroke="#000" stroke-width="1.3"/><path d="M495 60.7H508M495 63.1H508M495 65.4H508M495 67.8H508M495 70.2H508" stroke="#000" stroke-width="1.2"/><path d="M519 59H524M519 61.2H524M519 63.4H524M519 65.6H524M519 67.8H524M519 70H524" stroke="#000" stroke-width="1.1"/><path d="M541.0 59.4H544.5L546.0 60.4H550.5L552.0 61.4H555.5" stroke="#d83020" fill="none" stroke-width="1.4"/><path d="M541.0 62.6H544.5L546.0 63.2H550.5L552.0 63.8H555.5" stroke="#30d030" fill="none" stroke-width="1.4"/><path d="M541.0 65.3H544.5L546.0 66.8H550.5L552.0 68.4H555.5" stroke="#101060" fill="none" stroke-width="1.4"/><path d="M541.0 68.4H544.5L546.0 66.8H550.5L552.0 65.3H555.5" stroke="#30d8e8" fill="none" stroke-width="1.4"/><path d="M541.0 66.4H544.5L546.0 66.8H550.5L552.0 67.2H555.5" stroke="#e8e040" fill="none" stroke-width="1.4"/><path d="M541.0 70.1H544.5L546.0 70.8H550.5L552.0 71.6H555.5" stroke="#e030e0" fill="none" stroke-width="1.4"/><path d="M563.8 60.4H567.3L568.8 62.5H573.3L574.8 64.5H578.3" stroke="#30c830" fill="none" stroke-width="1.4"/><path d="M563.8 63.4H567.3L568.8 62.4H573.3L574.8 61.4H578.3" stroke="#1010a0" fill="none" stroke-width="1.4"/><path d="M563.8 66.6H567.3L568.8 66.4H573.3L574.8 66.2H578.3" stroke="#f0e030" fill="none" stroke-width="1.4"/><path d="M563.8 69.4H567.3L568.8 67.9H573.3L574.8 66.4H578.3" stroke="#e030d0" fill="none" stroke-width="1.4"/><path d="M587.0 59.4H590.5L592.0 60.4H596.5L598.0 61.4H601.5" stroke="#d83020" fill="none" stroke-width="1.4"/><path d="M587.0 62.6H590.5L592.0 63.2H596.5L598.0 63.8H601.5" stroke="#30d030" fill="none" stroke-width="1.4"/><path d="M587.0 65.3H590.5L592.0 66.8H596.5L598.0 68.4H601.5" stroke="#101060" fill="none" stroke-width="1.4"/><path d="M587.0 68.4H590.5L592.0 66.8H596.5L598.0 65.3H601.5" stroke="#30d8e8" fill="none" stroke-width="1.4"/><path d="M587.0 66.4H590.5L592.0 66.8H596.5L598.0 67.2H601.5" stroke="#e8e040" fill="none" stroke-width="1.4"/><path d="M587.0 70.1H590.5L592.0 70.8H596.5L598.0 71.6H601.5" stroke="#e030e0" fill="none" stroke-width="1.4"/><path d="M609.8 60.4H613.3L614.8 62.5H619.3L620.8 64.5H624.3" stroke="#30c830" fill="none" stroke-width="1.4"/><path d="M609.8 63.4H613.3L614.8 62.4H619.3L620.8 61.4H624.3" stroke="#1010a0" fill="none" stroke-width="1.4"/><path d="M609.8 66.6H613.3L614.8 66.4H619.3L620.8 66.2H624.3" stroke="#f0e030" fill="none" stroke-width="1.4"/><path d="M609.8 69.4H613.3L614.8 67.9H619.3L620.8 66.4H624.3" stroke="#e030d0" fill="none" stroke-width="1.4"/><rect x="629.5" y="55.5" width="22" height="21" fill="#f6f4ec" stroke="#c8c4b4"/><text x="632.5" y="71.5" font-size="15" font-weight="bold" fill="#000" letter-spacing="-0.8">T&#248;</text><text x="655.5" y="70.5" font-size="13" font-weight="bold" fill="#000" letter-spacing="-2" textLength="15" lengthAdjust="spacingAndGlyphs">S&amp;T</text><path d="M679 66H688M682 63L679 66L682 69M685 62Q692 56 692.5 62Q693 66 691 68Q694 72 689 72Q685 71 685.5 68" fill="none" stroke="#000" stroke-width="1.1"/><path d="M709 59V73" stroke="#000" stroke-width="1.6"/><path d="M705.5 62.5L709 58.5L712.5 62.5ZM705.5 69.5L709 73.5L712.5 69.5Z" fill="#000"/><rect x="730" y="57.5" width="16" height="16" fill="#1838d8"/><path d="M730 57.5H737L735 63L730 65Z" fill="#20b040"/><path d="M740 57.5H746V66L742 64Z" fill="#20b040"/><path d="M734 62Q738 70 744 64" stroke="#e02020" fill="none" stroke-width="1.3"/><path d="M737 58Q741 62 739 67" stroke="#fff" fill="none" stroke-width="1"/><path d="M730 69Q738 66 746 70V73.5H730Z" fill="#2050f0"/><text x="753.5" y="70" font-size="10" fill="#000" textLength="15" lengthAdjust="spacingAndGlyphs">M<tspan font-size="8">AP</tspan></text><circle cx="784" cy="66" r="5.6" fill="#f0e020" stroke="#000" stroke-width="1"/><path d="M781 66H787M784 63V69" stroke="#000" stroke-width="1.5"/><circle cx="807.3" cy="66" r="5.6" fill="#f0e020" stroke="#000" stroke-width="1"/><path d="M804.3 66H810.3" stroke="#000" stroke-width="1.5"/><circle cx="829.8" cy="66" r="7.6" fill="none" stroke="#e02020" stroke-width="1.1"/><circle cx="829.8" cy="66" r="4" fill="none" stroke="#e02020" stroke-width="1.1"/><rect x="842.5" y="55.5" width="21.5" height="21" fill="#f6f4ec" stroke="#c8c4b4"/><path d="M850 59.5H857.5L861 63V69L857.5 72.5H850L846.5 69V63Z" fill="#1828d0" stroke="#000" stroke-width=".8"/><path d="M850.5 69.5L856.5 63.5M853 63H857V67" stroke="#fff" stroke-width="1.4" fill="none"/><path d="M882.2 60V72" stroke="#000" stroke-width="1.8"/><path d="M878 64L882.2 59L886.4 64" fill="none" stroke="#000" stroke-width="1.8"/><text x="906" y="71.5" font-size="16" font-weight="bold" fill="#f0e020" stroke="#000" stroke-width=".9">?</text><path d="M927 58.5V70L929.8 67.5L932 72L933.8 71L931.6 66.8H935Z" fill="#000"/><text x="933" y="70" font-size="14" font-weight="bold" fill="#101090">?</text></svg></div>
<div id="cedge"></div><div id="client"><svg class="abs" style="left:0;top:0" width="948" height="428" viewBox="8 79 948 428" font-family='"Liberation Sans",sans-serif' font-weight="bold" font-size="13"><defs><clipPath id="cpT"><rect x="150.5" y="101.5" width="474.0" height="382.0"/></clipPath></defs><g clip-path="url(#cpT)"><path d="M150.5 483.5L624.5 747.4M150.5 463.5L624.5 717.7M150.5 445.2L624.5 690.6M150.5 428.4L624.5 665.7M150.5 413.0L624.5 642.8M150.5 398.7L624.5 621.6M150.5 385.4L624.5 601.9M150.5 373.1L624.5 583.6M150.5 361.5L624.5 566.5M150.5 350.7L624.5 550.5M150.5 340.5L624.5 535.5M150.5 330.7L624.5 521.4M150.5 321.2L624.5 508.0M150.5 312.0L624.5 495.4M150.5 303.1L624.5 483.5M150.5 294.5L624.5 472.2M150.5 286.1L624.5 461.5M150.5 278.0L624.5 451.2M150.5 270.2L624.5 441.5M150.5 262.5L624.5 432.2M150.5 255.1L624.5 423.4M150.5 247.8L624.5 414.9" fill="none" stroke="#38c438" stroke-width="1.25"/><path d="M93.2 437.4L96.8 439.7L100.5 442.0L104.2 444.3L107.9 446.6L111.7 449.0L115.4 451.3L119.2 453.7L123.0 456.0L126.9 458.4L130.8 460.8L134.7 463.2L138.6 465.6L142.5 468.0L146.5 470.4L150.5 472.8L154.5 475.3L158.6 477.7L162.7 480.2L166.8 482.7L171.0 485.2L175.1 487.7L179.3 490.2L183.6 492.7L187.8 495.3L192.1 497.8L196.4 500.4L200.8 502.9L205.2 505.5L209.6 508.1L214.0 510.7L218.5 513.3M93.1 419.5L96.7 421.7L100.4 424.0L104.1 426.2L107.8 428.4L111.5 430.7L115.3 432.9L119.1 435.2L122.9 437.4L126.7 439.7L130.6 442.0L134.5 444.3L138.4 446.6L142.4 449.0L146.4 451.3L150.4 453.7L154.4 456.0L158.5 458.4L162.6 460.8L166.7 463.2L170.8 465.6L175.0 468.0L179.2 470.4L183.4 472.8L187.7 475.3L192.0 477.7L196.3 480.2L200.6 482.7L205.0 485.2L209.4 487.7L213.9 490.2L218.3 492.7L222.8 495.3L227.4 497.8L231.9 500.4L236.5 502.9L241.1 505.5L245.8 508.1L250.5 510.7L255.2 513.3M91.4 402.3L95.1 404.4L98.7 406.5L102.4 408.7L106.1 410.8L109.8 413.0L113.6 415.2L117.4 417.3L121.2 419.5L125.0 421.7L128.9 424.0L132.8 426.2L136.7 428.4L140.6 430.7L144.6 432.9L148.6 435.2L152.6 437.4L156.6 439.7L160.7 442.0L164.8 444.3L168.9 446.6L173.1 449.0L177.3 451.3L181.5 453.7L185.8 456.0L190.0 458.4L194.3 460.8L198.7 463.2L203.0 465.6L207.4 468.0L211.9 470.4L216.3 472.8L220.8 475.3L225.3 477.7L229.9 480.2L234.5 482.7L239.1 485.2L243.7 487.7L248.4 490.2L253.1 492.7L257.8 495.3L262.6 497.8L267.4 500.4L272.2 502.9L277.1 505.5L282.0 508.1L286.9 510.7L291.9 513.3M92.1 387.7L95.7 389.7L99.4 391.8L103.1 393.9L106.8 396.0L110.5 398.1L114.3 400.2L118.1 402.3L121.9 404.4L125.7 406.5L129.6 408.7L133.5 410.8L137.4 413.0L141.3 415.2L145.3 417.3L149.3 419.5L153.3 421.7L157.4 424.0L161.4 426.2L165.6 428.4L169.7 430.7L173.9 432.9L178.1 435.2L182.3 437.4L186.5 439.7L190.8 442.0L195.1 444.3L199.5 446.6L203.8 449.0L208.2 451.3L212.7 453.7L217.1 456.0L221.6 458.4L226.1 460.8L230.7 463.2L235.3 465.6L239.9 468.0L244.5 470.4L249.2 472.8L253.9 475.3L258.7 477.7L263.4 480.2L268.2 482.7L273.1 485.2L277.9 487.7L282.8 490.2L287.8 492.7L292.7 495.3L297.7 497.8L302.8 500.4L307.8 502.9L312.9 505.5L318.0 508.1L323.2 510.7L328.4 513.3M91.5 373.5L95.2 375.5L98.8 377.5L102.5 379.5L106.2 381.6L109.9 383.6L113.7 385.6L117.5 387.7L121.3 389.7L125.1 391.8L129.0 393.9L132.8 396.0L136.8 398.1L140.7 400.2L144.7 402.3L148.7 404.4L152.7 406.5L156.7 408.7L160.8 410.8L164.9 413.0L169.0 415.2L173.2 417.3L177.4 419.5L181.6 421.7L185.9 424.0L190.1 426.2L194.4 428.4L198.8 430.7L203.1 432.9L207.5 435.2L212.0 437.4L216.4 439.7L220.9 442.0L225.4 444.3L230.0 446.6L234.5 449.0L239.2 451.3L243.8 453.7L248.5 456.0L253.2 458.4L257.9 460.8L262.7 463.2L267.5 465.6L272.3 468.0L277.2 470.4L282.1 472.8L287.0 475.3L291.9 477.7L296.9 480.2L301.9 482.7L307.0 485.2L312.1 487.7L317.2 490.2L322.3 492.7L327.5 495.3L332.7 497.8L337.9 500.4L343.1 502.9L348.4 505.5L353.7 508.1L359.0 510.7L364.4 513.3M93.5 361.8L97.1 363.7L100.8 365.6L104.5 367.6L108.2 369.6L111.9 371.5L115.7 373.5L119.5 375.5L123.3 377.5L127.2 379.5L131.0 381.6L134.9 383.6L138.9 385.6L142.8 387.7L146.8 389.7L150.8 391.8L154.8 393.9L158.9 396.0L163.0 398.1L167.1 400.2L171.3 402.3L175.4 404.4L179.6 406.5L183.9 408.7L188.1 410.8L192.4 413.0L196.8 415.2L201.1 417.3L205.5 419.5L209.9 421.7L214.3 424.0L218.8 426.2L223.3 428.4L227.9 430.7L232.4 432.9L237.0 435.2L241.6 437.4L246.3 439.7L251.0 442.0L255.7 444.3L260.5 446.6L265.2 449.0L270.0 451.3L274.9 453.7L279.8 456.0L284.7 458.4L289.6 460.8L294.6 463.2L299.6 465.6L304.6 468.0L309.7 470.4L314.8 472.8L319.9 475.3L325.0 477.7L330.2 480.2L335.4 482.7L340.6 485.2L345.9 487.7L351.1 490.2L356.4 492.7L361.7 495.3L367.1 497.8L372.4 500.4L377.8 502.9L383.2 505.5L388.5 508.1L393.9 510.7L399.3 513.3M90.8 348.4L94.4 350.3L98.0 352.2L101.7 354.1L105.4 356.0L109.1 357.9L112.9 359.8L116.7 361.8L120.5 363.7L124.3 365.6L128.1 367.6L132.0 369.6L135.9 371.5L139.9 373.5L143.8 375.5L147.8 377.5L151.8 379.5L155.9 381.6L159.9 383.6L164.0 385.6L168.2 387.7L172.3 389.7L176.5 391.8L180.7 393.9L185.0 396.0L189.2 398.1L193.5 400.2L197.9 402.3L202.2 404.4L206.6 406.5L211.0 408.7L215.5 410.8L220.0 413.0L224.5 415.2L229.0 417.3L233.6 419.5L238.2 421.7L242.8 424.0L247.5 426.2L252.2 428.4L256.9 430.7L261.7 432.9L266.4 435.2L271.3 437.4L276.1 439.7L281.0 442.0L285.9 444.3L290.9 446.6L295.8 449.0L300.8 451.3L305.9 453.7L310.9 456.0L316.0 458.4L321.1 460.8L326.3 463.2L331.4 465.6L336.6 468.0L341.9 470.4L347.1 472.8L352.3 475.3L357.6 477.7L362.9 480.2L368.2 482.7L373.6 485.2L378.9 487.7L384.2 490.2L389.6 492.7L394.9 495.3L400.3 497.8L405.6 500.4L411.0 502.9L416.3 505.5L421.6 508.1L426.9 510.7L432.2 513.3M90.8 337.2L94.4 339.1L98.0 340.9L101.7 342.8L105.4 344.7L109.1 346.6L112.9 348.4L116.7 350.3L120.5 352.2L124.3 354.1L128.1 356.0L132.0 357.9L135.9 359.8L139.9 361.8L143.8 363.7L147.8 365.6L151.8 367.6L155.9 369.6L159.9 371.5L164.0 373.5L168.2 375.5L172.3 377.5L176.5 379.5L180.7 381.6L185.0 383.6L189.2 385.6L193.5 387.7L197.9 389.7L202.2 391.8L206.6 393.9L211.0 396.0L215.5 398.1L220.0 400.2L224.5 402.3L229.0 404.4L233.6 406.5L238.2 408.7L242.8 410.8L247.5 413.0L252.2 415.2L256.9 417.3L261.6 419.5L266.4 421.7L271.2 424.0L276.1 426.2L281.0 428.4L285.9 430.7L290.8 432.9L295.8 435.2L300.8 437.4L305.8 439.7L310.9 442.0L315.9 444.3L321.1 446.6L326.2 449.0L331.3 451.3L336.5 453.7L341.7 456.0L346.9 458.4L352.2 460.8L357.4 463.2L362.7 465.6L368.0 468.0L373.3 470.4L378.6 472.8L383.9 475.3L389.2 477.7L394.5 480.2L399.8 482.7L405.1 485.2L410.4 487.7L415.7 490.2L420.9 492.7L426.1 495.3L431.3 497.8L436.5 500.4L441.7 502.9L446.8 505.5L451.9 508.1L456.9 510.7L461.9 513.3M93.5 327.8L97.2 329.7L100.8 331.5L104.5 333.4L108.2 335.3L112.0 337.2L115.8 339.1L119.5 340.9L123.4 342.8L127.2 344.7L131.1 346.6L135.0 348.4L138.9 350.3L142.9 352.2L146.9 354.1L150.9 356.0L154.9 357.9L159.0 359.8L163.1 361.8L167.2 363.7L171.3 365.6L175.5 367.6L179.7 369.6L183.9 371.5L188.2 373.5L192.5 375.5L196.8 377.5L201.2 379.5L205.6 381.6L210.0 383.6L214.4 385.6L218.9 387.7L223.4 389.7L227.9 391.8L232.5 393.9L237.1 396.0L241.7 398.1L246.3 400.2L251.0 402.3L255.7 404.4L260.5 406.5L265.3 408.7L270.1 410.8L274.9 413.0L279.8 415.2L284.7 417.3L289.6 419.5L294.6 421.7L299.6 424.0L304.6 426.2L309.6 428.4L314.7 430.7L319.8 432.9L324.9 435.2L330.0 437.4L335.2 439.7L340.4 442.0L345.6 444.3L350.8 446.6L356.0 449.0L361.2 451.3L366.5 453.7L371.8 456.0L377.0 458.4L382.3 460.8L387.6 463.2L392.8 465.6L398.1 468.0L403.3 470.4L408.5 472.8L413.7 475.3L418.9 477.7L424.1 480.2L429.2 482.7L434.3 485.2L439.4 487.7L444.4 490.2L449.4 492.7L454.3 495.3L459.2 497.8L464.1 500.4L468.9 502.9L473.6 505.5L478.4 508.1L483.0 510.7L487.6 513.3M91.9 316.5L95.5 318.4L99.1 320.3L102.8 322.2L106.5 324.0L110.3 325.9L114.0 327.8L117.8 329.7L121.6 331.5L125.4 333.4L129.3 335.3L133.2 337.2L137.1 339.1L141.1 340.9L145.0 342.8L149.0 344.7L153.0 346.6L157.1 348.4L161.2 350.3L165.3 352.2L169.4 354.1L173.6 356.0L177.8 357.9L182.0 359.8L186.2 361.8L190.5 363.7L194.8 365.6L199.2 367.6L203.5 369.6L207.9 371.5L212.4 373.5L216.8 375.5L221.3 377.5L225.8 379.5L230.4 381.6L235.0 383.6L239.6 385.6L244.2 387.7L248.9 389.7L253.6 391.8L258.3 393.9L263.1 396.0L267.9 398.1L272.7 400.2L277.5 402.3L282.4 404.4L287.3 406.5L292.3 408.7L297.2 410.8L302.2 413.0L307.2 415.2L312.3 417.3L317.4 419.5L322.5 421.7L327.6 424.0L332.7 426.2L337.9 428.4L343.0 430.7L348.2 432.9L353.4 435.2L358.6 437.4L363.9 439.7L369.1 442.0L374.3 444.3L379.5 446.6L384.7 449.0L390.0 451.3L395.2 453.7L400.3 456.0L405.5 458.4L410.7 460.8L415.8 463.2L420.9 465.6L425.9 468.0L431.0 470.4L436.0 472.8L440.9 475.3L445.8 477.7L450.7 480.2L455.5 482.7L460.3 485.2L465.0 487.7L469.7 490.2L474.3 492.7L478.8 495.3L483.4 497.8L487.8 500.4L492.2 502.9L496.6 505.5L500.9 508.1L505.2 510.7L509.4 513.3M93.1 307.2L96.7 309.0L100.4 310.9L104.1 312.8L107.8 314.7L111.5 316.5L115.3 318.4L119.1 320.3L122.9 322.2L126.8 324.0L130.6 325.9L134.5 327.8L138.4 329.7L142.4 331.5L146.4 333.4L150.4 335.3L154.4 337.2L158.5 339.1L162.6 340.9L166.7 342.8L170.8 344.7L175.0 346.6L179.2 348.4L183.4 350.3L187.7 352.2L192.0 354.1L196.3 356.0L200.6 357.9L205.0 359.8L209.4 361.8L213.9 363.7L218.3 365.6L222.8 367.6L227.4 369.6L231.9 371.5L236.5 373.5L241.1 375.5L245.8 377.5L250.5 379.5L255.2 381.6L259.9 383.6L264.7 385.6L269.5 387.7L274.3 389.7L279.2 391.8L284.0 393.9L289.0 396.0L293.9 398.1L298.9 400.2L303.9 402.3L308.9 404.4L313.9 406.5L319.0 408.7L324.1 410.8L329.2 413.0L334.3 415.2L339.5 417.3L344.6 419.5L349.8 421.7L355.0 424.0L360.2 426.2L365.3 428.4L370.5 430.7L375.7 432.9L380.9 435.2L386.1 437.4L391.2 439.7L396.4 442.0L401.5 444.3L406.6 446.6L411.7 449.0L416.7 451.3L421.7 453.7L426.7 456.0L431.6 458.4L436.5 460.8L441.3 463.2L446.1 465.6L450.9 468.0L455.6 470.4L460.2 472.8L464.8 475.3L469.3 477.7L473.8 480.2L478.3 482.7L482.7 485.2L487.0 487.7L491.3 490.2L495.5 492.7L499.7 495.3L503.8 497.8L507.9 500.4L511.9 502.9L515.9 505.5L519.8 508.1L523.7 510.7L527.6 513.3M93.6 297.8L97.3 299.6L100.9 301.5L104.6 303.4L108.4 305.3L112.1 307.2L115.9 309.0L119.7 310.9L123.5 312.8L127.3 314.7L131.2 316.5L135.1 318.4L139.0 320.3L143.0 322.2L147.0 324.0L151.0 325.9L155.0 327.8L159.1 329.7L163.2 331.5L167.3 333.4L171.5 335.3L175.6 337.2L179.8 339.1L184.1 340.9L188.3 342.8L192.6 344.7L197.0 346.6L201.3 348.4L205.7 350.3L210.1 352.2L214.5 354.1L219.0 356.0L223.5 357.9L228.0 359.8L232.6 361.8L237.2 363.7L241.8 365.6L246.5 367.6L251.2 369.6L255.9 371.5L260.6 373.5L265.4 375.5L270.2 377.5L275.0 379.5L279.9 381.6L284.8 383.6L289.7 385.6L294.6 387.7L299.6 389.7L304.6 391.8L309.6 393.9L314.6 396.0L319.7 398.1L324.8 400.2L329.9 402.3L335.0 404.4L340.1 406.5L345.2 408.7L350.4 410.8L355.5 413.0L360.7 415.2L365.8 417.3L371.0 419.5L376.1 421.7L381.3 424.0L386.4 426.2L391.5 428.4L396.5 430.7L401.6 432.9L406.6 435.2L411.6 437.4L416.6 439.7L421.5 442.0L426.4 444.3L431.2 446.6L436.0 449.0L440.7 451.3L445.4 453.7L450.1 456.0L454.7 458.4L459.2 460.8L463.7 463.2L468.1 465.6L472.5 468.0L476.8 470.4L481.0 472.8L485.3 475.3L489.4 477.7L493.5 480.2L497.6 482.7L501.6 485.2L505.6 487.7L509.5 490.2L513.3 492.7L517.2 495.3L521.0 497.8L524.7 500.4L528.4 502.9L532.1 505.5L535.7 508.1L539.3 510.7L542.8 513.3M93.5 288.4L97.2 290.3L100.9 292.1L104.5 294.0L108.3 295.9L112.0 297.8L115.8 299.6L119.6 301.5L123.4 303.4L127.2 305.3L131.1 307.2L135.0 309.0L138.9 310.9L142.9 312.8L146.9 314.7L150.9 316.5L154.9 318.4L159.0 320.3L163.1 322.2L167.2 324.0L171.3 325.9L175.5 327.8L179.7 329.7L184.0 331.5L188.2 333.4L192.5 335.3L196.8 337.2L201.2 339.1L205.6 340.9L210.0 342.8L214.4 344.7L218.9 346.6L223.4 348.4L227.9 350.3L232.5 352.2L237.1 354.1L241.7 356.0L246.3 357.9L251.0 359.8L255.7 361.8L260.5 363.7L265.2 365.6L270.0 367.6L274.9 369.6L279.7 371.5L284.6 373.5L289.5 375.5L294.4 377.5L299.4 379.5L304.4 381.6L309.4 383.6L314.4 385.6L319.5 387.7L324.5 389.7L329.6 391.8L334.7 393.9L339.8 396.0L344.9 398.1L350.0 400.2L355.1 402.3L360.3 404.4L365.4 406.5L370.5 408.7L375.6 410.8L380.7 413.0L385.7 415.2L390.8 417.3L395.8 419.5L400.8 421.7L405.7 424.0L410.7 426.2L415.5 428.4L420.4 430.7L425.2 432.9L429.9 435.2L434.6 437.4L439.3 439.7L443.9 442.0L448.4 444.3L452.9 446.6L457.3 449.0L461.7 451.3L466.0 453.7L470.3 456.0L474.5 458.4L478.7 460.8L482.8 463.2L486.8 465.6L490.8 468.0L494.8 470.4L498.7 472.8L502.6 475.3L506.4 477.7L510.1 480.2L513.9 482.7L517.6 485.2L521.2 487.7L524.8 490.2L528.4 492.7L531.9 495.3L535.4 497.8L538.9 500.4L542.3 502.9L545.7 505.5L549.1 508.1L552.5 510.7L555.8 513.3M92.9 279.0L96.5 280.9L100.2 282.8L103.8 284.6L107.6 286.5L111.3 288.4L115.1 290.3L118.8 292.1L122.7 294.0L126.5 295.9L130.4 297.8L134.3 299.6L138.2 301.5L142.1 303.4L146.1 305.3L150.1 307.2L154.2 309.0L158.2 310.9L162.3 312.8L166.4 314.7L170.6 316.5L174.7 318.4L178.9 320.3L183.2 322.2L187.4 324.0L191.7 325.9L196.0 327.8L200.4 329.7L204.7 331.5L209.1 333.4L213.6 335.3L218.0 337.2L222.5 339.1L227.1 340.9L231.6 342.8L236.2 344.7L240.8 346.6L245.5 348.4L250.1 350.3L254.8 352.2L259.6 354.1L264.3 356.0L269.1 357.9L273.9 359.8L278.8 361.8L283.6 363.7L288.5 365.6L293.5 367.6L298.4 369.6L303.4 371.5L308.4 373.5L313.4 375.5L318.4 377.5L323.4 379.5L328.5 381.6L333.6 383.6L338.7 385.6L343.7 387.7L348.8 389.7L353.9 391.8L359.0 393.9L364.1 396.0L369.1 398.1L374.2 400.2L379.2 402.3L384.2 404.4L389.2 406.5L394.2 408.7L399.1 410.8L404.0 413.0L408.9 415.2L413.7 417.3L418.4 419.5L423.2 421.7L427.8 424.0L432.4 426.2L437.0 428.4L441.5 430.7L446.0 432.9L450.4 435.2L454.7 437.4L459.0 439.7L463.2 442.0L467.4 444.3L471.5 446.6L475.6 449.0L479.6 451.3L483.6 453.7L487.5 456.0L491.4 458.4L495.2 460.8L499.0 463.2L502.7 465.6L506.4 468.0L510.0 470.4L513.6 472.8L517.2 475.3L520.7 477.7L524.2 480.2L527.7 482.7L531.1 485.2L534.5 487.7L537.9 490.2L541.2 492.7L544.5 495.3L547.8 497.8L551.0 500.4L554.2 502.9L557.4 505.5L560.6 508.1L563.8 510.7L566.9 513.3M91.6 269.6L95.2 271.5L98.9 273.4L102.6 275.3L106.3 277.1L110.0 279.0L113.8 280.9L117.5 282.8L121.4 284.6L125.2 286.5L129.0 288.4L132.9 290.3L136.8 292.1L140.8 294.0L144.8 295.9L148.7 297.8L152.8 299.6L156.8 301.5L160.9 303.4L165.0 305.3L169.1 307.2L173.3 309.0L177.5 310.9L181.7 312.8L186.0 314.7L190.2 316.5L194.5 318.4L198.9 320.3L203.2 322.2L207.6 324.0L212.1 325.9L216.5 327.8L221.0 329.7L225.5 331.5L230.0 333.4L234.6 335.3L239.2 337.2L243.8 339.1L248.5 340.9L253.2 342.8L257.9 344.7L262.7 346.6L267.4 348.4L272.2 350.3L277.1 352.2L281.9 354.1L286.8 356.0L291.7 357.9L296.6 359.8L301.6 361.8L306.6 363.7L311.6 365.6L316.6 367.6L321.6 369.6L326.6 371.5L331.7 373.5L336.7 375.5L341.8 377.5L346.8 379.5L351.9 381.6L357.0 383.6L362.0 385.6L367.0 387.7L372.0 389.7L377.0 391.8L382.0 393.9L386.9 396.0L391.8 398.1L396.7 400.2L401.6 402.3L406.3 404.4L411.1 406.5L415.8 408.7L420.4 410.8L425.0 413.0L429.6 415.2L434.1 417.3L438.5 419.5L442.9 421.7L447.2 424.0L451.5 426.2L455.7 428.4L459.9 430.7L464.0 432.9L468.0 435.2L472.0 437.4L475.9 439.7L479.8 442.0L483.7 444.3L487.5 446.6L491.2 449.0L494.9 451.3L498.6 453.7L502.2 456.0L505.7 458.4L509.3 460.8L512.8 463.2L516.2 465.6L519.6 468.0L523.0 470.4L526.4 472.8L529.7 475.3L533.0 477.7L536.3 480.2L539.5 482.7L542.7 485.2L545.9 487.7L549.0 490.2L552.2 492.7L555.3 495.3L558.4 497.8L561.5 500.4L564.5 502.9L567.6 505.5L570.6 508.1L573.6 510.7L576.6 513.3M93.5 262.1L97.1 264.0L100.8 265.9L104.5 267.7L108.2 269.6L111.9 271.5L115.7 273.4L119.5 275.3L123.3 277.1L127.2 279.0L131.0 280.9L134.9 282.8L138.9 284.6L142.8 286.5L146.8 288.4L150.8 290.3L154.8 292.1L158.9 294.0L163.0 295.9L167.1 297.8L171.3 299.6L175.4 301.5L179.6 303.4L183.9 305.3L188.1 307.2L192.4 309.0L196.8 310.9L201.1 312.8L205.5 314.7L209.9 316.5L214.3 318.4L218.8 320.3L223.3 322.2L227.8 324.0L232.4 325.9L237.0 327.8L241.6 329.7L246.2 331.5L250.9 333.4L255.6 335.3L260.3 337.2L265.1 339.1L269.9 340.9L274.7 342.8L279.5 344.7L284.4 346.6L289.3 348.4L294.2 350.3L299.1 352.2L304.1 354.1L309.0 356.0L314.0 357.9L319.0 359.8L324.0 361.8L329.1 363.7L334.1 365.6L339.1 367.6L344.1 369.6L349.2 371.5L354.2 373.5L359.2 375.5L364.2 377.5L369.2 379.5L374.1 381.6L379.0 383.6L383.9 385.6L388.8 387.7L393.6 389.7L398.4 391.8L403.2 393.9L407.8 396.0L412.5 398.1L417.1 400.2L421.6 402.3L426.1 404.4L430.5 406.5L434.9 408.7L439.2 410.8L443.5 413.0L447.7 415.2L451.8 417.3L455.9 419.5L460.0 421.7L463.9 424.0L467.9 426.2L471.7 428.4L475.6 430.7L479.3 432.9L483.1 435.2L486.7 437.4L490.4 439.7L494.0 442.0L497.5 444.3L501.0 446.6L504.5 449.0L507.9 451.3L511.3 453.7L514.7 456.0L518.0 458.4L521.3 460.8L524.6 463.2L527.8 465.6L531.0 468.0L534.2 470.4L537.3 472.8L540.4 475.3L543.6 477.7L546.6 480.2L549.7 482.7L552.7 485.2L555.7 487.7L558.7 490.2L561.7 492.7L564.7 495.3L567.6 497.8L570.6 500.4L573.5 502.9L576.4 505.5L579.3 508.1L582.2 510.7L585.0 513.3M91.2 252.7L94.8 254.6L98.5 256.5L102.2 258.4L105.9 260.2L109.6 262.1L113.3 264.0L117.1 265.9L120.9 267.7L124.8 269.6L128.6 271.5L132.5 273.4L136.4 275.3L140.4 277.1L144.3 279.0L148.3 280.9L152.3 282.8L156.4 284.6L160.4 286.5L164.5 288.4L168.7 290.3L172.8 292.1L177.0 294.0L181.2 295.9L185.5 297.8L189.8 299.6L194.1 301.5L198.4 303.4L202.7 305.3L207.1 307.2L211.6 309.0L216.0 310.9L220.5 312.8L225.0 314.7L229.5 316.5L234.1 318.4L238.7 320.3L243.3 322.2L248.0 324.0L252.7 325.9L257.4 327.8L262.1 329.7L266.9 331.5L271.7 333.4L276.5 335.3L281.3 337.2L286.2 339.1L291.1 340.9L296.0 342.8L300.9 344.7L305.9 346.6L310.8 348.4L315.8 350.3L320.8 352.2L325.8 354.1L330.8 356.0L335.8 357.9L340.8 359.8L345.8 361.8L350.8 363.7L355.7 365.6L360.7 367.6L365.6 369.6L370.6 371.5L375.5 373.5L380.3 375.5L385.1 377.5L389.9 379.5L394.7 381.6L399.4 383.6L404.0 385.6L408.6 387.7L413.2 389.7L417.6 391.8L422.1 393.9L426.5 396.0L430.8 398.1L435.0 400.2L439.2 402.3L443.4 404.4L447.5 406.5L451.5 408.7L455.5 410.8L459.4 413.0L463.3 415.2L467.1 417.3L470.9 419.5L474.6 421.7L478.3 424.0L481.9 426.2L485.5 428.4L489.0 430.7L492.5 432.9L496.0 435.2L499.4 437.4L502.7 439.7L506.1 442.0L509.4 444.3L512.7 446.6L515.9 449.0L519.1 451.3L522.3 453.7L525.5 456.0L528.6 458.4L531.7 460.8L534.8 463.2L537.8 465.6L540.8 468.0L543.8 470.4L546.8 472.8L549.8 475.3L552.8 477.7L555.7 480.2L558.6 482.7L561.5 485.2L564.4 487.7L567.3 490.2L570.1 492.7L573.0 495.3L575.8 497.8L578.6 500.4L581.4 502.9L584.2 505.5L587.0 508.1L589.8 510.7L592.5 513.3M92.1 245.2L95.8 247.1L99.4 249.0L103.1 250.9L106.8 252.7L110.5 254.6L114.3 256.5L118.1 258.4L121.9 260.2L125.7 262.1L129.6 264.0L133.5 265.9L137.4 267.7L141.3 269.6L145.3 271.5L149.3 273.4L153.3 275.3L157.4 277.1L161.5 279.0L165.6 280.9L169.7 282.8L173.9 284.6L178.1 286.5L182.3 288.4L186.5 290.3L190.8 292.1L195.1 294.0L199.5 295.9L203.8 297.8L208.2 299.6L212.7 301.5L217.1 303.4L221.6 305.3L226.1 307.2L230.7 309.0L235.2 310.9L239.8 312.8L244.5 314.7L249.1 316.5L253.8 318.4L258.5 320.3L263.3 322.2L268.0 324.0L272.8 325.9L277.6 327.8L282.5 329.7L287.4 331.5L292.2 333.4L297.1 335.3L302.1 337.2L307.0 339.1L312.0 340.9L316.9 342.8L321.9 344.7L326.9 346.6L331.8 348.4L336.8 350.3L341.8 352.2L346.7 354.1L351.7 356.0L356.6 357.9L361.5 359.8L366.4 361.8L371.3 363.7L376.1 365.6L380.9 367.6L385.6 369.6L390.4 371.5L395.0 373.5L399.6 375.5L404.2 377.5L408.7 379.5L413.2 381.6L417.5 383.6L421.9 385.6L426.2 387.7L430.4 389.7L434.6 391.8L438.7 393.9L442.7 396.0L446.7 398.1L450.6 400.2L454.5 402.3L458.3 404.4L462.1 406.5L465.8 408.7L469.5 410.8L473.1 413.0L476.7 415.2L480.2 417.3L483.7 419.5L487.2 421.7L490.6 424.0L494.0 426.2L497.3 428.4L500.6 430.7L503.8 432.9L507.1 435.2L510.3 437.4L513.4 439.7L516.6 442.0L519.7 444.3L522.8 446.6L525.8 449.0L528.8 451.3L531.9 453.7L534.8 456.0L537.8 458.4L540.7 460.8L543.7 463.2L546.6 465.6L549.5 468.0L552.3 470.4L555.2 472.8L558.0 475.3L560.9 477.7L563.7 480.2L566.5 482.7L569.2 485.2L572.0 487.7L574.8 490.2L577.5 492.7L580.3 495.3L583.0 497.8L585.7 500.4L588.4 502.9L591.1 505.5L593.8 508.1L596.5 510.7L599.2 513.3M92.6 237.7L96.2 239.6L99.9 241.5L103.6 243.4L107.3 245.2L111.0 247.1L114.8 249.0L118.6 250.9L122.4 252.7L126.2 254.6L130.1 256.5L134.0 258.4L137.9 260.2L141.8 262.1L145.8 264.0L149.8 265.9L153.9 267.7L157.9 269.6L162.0 271.5L166.1 273.4L170.2 275.3L174.4 277.1L178.6 279.0L182.8 280.9L187.1 282.8L191.4 284.6L195.7 286.5L200.0 288.4L204.4 290.3L208.8 292.1L213.2 294.0L217.7 295.9L222.2 297.8L226.7 299.6L231.2 301.5L235.8 303.4L240.4 305.3L245.1 307.2L249.7 309.0L254.4 310.9L259.1 312.8L263.9 314.7L268.6 316.5L273.4 318.4L278.2 320.3L283.1 322.2L287.9 324.0L292.8 325.9L297.7 327.8L302.6 329.7L307.5 331.5L312.5 333.4L317.4 335.3L322.4 337.2L327.3 339.1L332.3 340.9L337.2 342.8L342.2 344.7L347.1 346.6L352.0 348.4L356.9 350.3L361.7 352.2L366.6 354.1L371.4 356.0L376.1 357.9L380.9 359.8L385.5 361.8L390.2 363.7L394.8 365.6L399.3 367.6L403.8 369.6L408.2 371.5L412.6 373.5L416.9 375.5L421.1 377.5L425.3 379.5L429.4 381.6L433.5 383.6L437.5 385.6L441.5 387.7L445.4 389.7L449.2 391.8L453.0 393.9L456.8 396.0L460.5 398.1L464.1 400.2L467.7 402.3L471.2 404.4L474.7 406.5L478.2 408.7L481.6 410.8L484.9 413.0L488.3 415.2L491.6 417.3L494.8 419.5L498.0 421.7L501.2 424.0L504.4 426.2L507.5 428.4L510.6 430.7L513.7 432.9L516.7 435.2L519.7 437.4L522.7 439.7L525.7 442.0L528.7 444.3L531.6 446.6L534.5 449.0L537.4 451.3L540.2 453.7L543.1 456.0L545.9 458.4L548.7 460.8L551.5 463.2L554.3 465.6L557.1 468.0L559.8 470.4L562.6 472.8L565.3 475.3L568.0 477.7L570.8 480.2L573.5 482.7L576.2 485.2L578.8 487.7L581.5 490.2L584.2 492.7L586.8 495.3L589.5 497.8L592.1 500.4L594.8 502.9L597.4 505.5L600.0 508.1L602.6 510.7L605.2 513.3M92.6 230.2L96.3 232.1L99.9 234.0L103.6 235.8L107.3 237.7L111.1 239.6L114.8 241.5L118.6 243.4L122.4 245.2L126.3 247.1L130.1 249.0L134.0 250.9L138.0 252.7L141.9 254.6L145.9 256.5L149.9 258.4L153.9 260.2L158.0 262.1L162.1 264.0L166.2 265.9L170.3 267.7L174.5 269.6L178.7 271.5L182.9 273.4L187.2 275.3L191.4 277.1L195.8 279.0L200.1 280.9L204.5 282.8L208.9 284.6L213.3 286.5L217.8 288.4L222.2 290.3L226.8 292.1L231.3 294.0L235.9 295.9L240.5 297.8L245.1 299.6L249.8 301.5L254.5 303.4L259.2 305.3L263.9 307.2L268.7 309.0L273.5 310.9L278.3 312.8L283.1 314.7L287.9 316.5L292.8 318.4L297.7 320.3L302.6 322.2L307.5 324.0L312.4 325.9L317.3 327.8L322.3 329.7L327.2 331.5L332.1 333.4L337.0 335.3L341.9 337.2L346.8 339.1L351.7 340.9L356.5 342.8L361.4 344.7L366.1 346.6L370.9 348.4L375.6 350.3L380.3 352.2L384.9 354.1L389.4 356.0L394.0 357.9L398.4 359.8L402.8 361.8L407.2 363.7L411.5 365.6L415.7 367.6L419.9 369.6L424.0 371.5L428.0 373.5L432.0 375.5L435.9 377.5L439.8 379.5L443.6 381.6L447.4 383.6L451.1 385.6L454.8 387.7L458.4 389.7L461.9 391.8L465.5 393.9L468.9 396.0L472.3 398.1L475.7 400.2L479.1 402.3L482.4 404.4L485.6 406.5L488.8 408.7L492.0 410.8L495.2 413.0L498.3 415.2L501.4 417.3L504.5 419.5L507.5 421.7L510.5 424.0L513.5 426.2L516.5 428.4L519.4 430.7L522.3 432.9L525.2 435.2L528.1 437.4L530.9 439.7L533.8 442.0L536.6 444.3L539.4 446.6L542.1 449.0L544.9 451.3L547.7 453.7L550.4 456.0L553.1 458.4L555.8 460.8L558.5 463.2L561.2 465.6L563.9 468.0L566.6 470.4L569.2 472.8L571.9 475.3L574.5 477.7L577.1 480.2L579.7 482.7L582.4 485.2L585.0 487.7L587.6 490.2L590.2 492.7L592.7 495.3L595.3 497.8L597.9 500.4L600.5 502.9L603.0 505.5L605.6 508.1L608.2 510.7L610.7 513.3M92.3 222.7L95.9 224.6L99.6 226.4L103.3 228.3L107.0 230.2L110.7 232.1L114.5 234.0L118.3 235.8L122.1 237.7L125.9 239.6L129.8 241.5L133.7 243.4L137.6 245.2L141.5 247.1L145.5 249.0L149.5 250.9L153.5 252.7L157.6 254.6L161.7 256.5L165.8 258.4L169.9 260.2L174.1 262.1L178.3 264.0L182.5 265.9L186.8 267.7L191.0 269.6L195.4 271.5L199.7 273.4L204.1 275.3L208.5 277.1L212.9 279.0L217.3 280.9L221.8 282.8L226.3 284.6L230.9 286.5L235.4 288.4L240.0 290.3L244.7 292.1L249.3 294.0L254.0 295.9L258.7 297.8L263.4 299.6L268.2 301.5L273.0 303.4L277.8 305.3L282.6 307.2L287.4 309.0L292.3 310.9L297.2 312.8L302.0 314.7L306.9 316.5L311.8 318.4L316.7 320.3L321.6 322.2L326.5 324.0L331.4 325.9L336.3 327.8L341.2 329.7L346.0 331.5L350.9 333.4L355.7 335.3L360.4 337.2L365.2 339.1L369.9 340.9L374.5 342.8L379.1 344.7L383.7 346.6L388.2 348.4L392.6 350.3L397.0 352.2L401.4 354.1L405.7 356.0L409.9 357.9L414.0 359.8L418.1 361.8L422.2 363.7L426.1 365.6L430.1 367.6L433.9 369.6L437.7 371.5L441.5 373.5L445.2 375.5L448.8 377.5L452.4 379.5L455.9 381.6L459.4 383.6L462.9 385.6L466.3 387.7L469.6 389.7L473.0 391.8L476.2 393.9L479.5 396.0L482.7 398.1L485.8 400.2L489.0 402.3L492.1 404.4L495.1 406.5L498.2 408.7L501.2 410.8L504.1 413.0L507.1 415.2L510.0 417.3L512.9 419.5L515.8 421.7L518.7 424.0L521.5 426.2L524.3 428.4L527.1 430.7L529.9 432.9L532.7 435.2L535.4 437.4L538.2 439.7L540.9 442.0L543.6 444.3L546.3 446.6L549.0 449.0L551.6 451.3L554.3 453.7L556.9 456.0L559.6 458.4L562.2 460.8L564.8 463.2L567.4 465.6L570.0 468.0L572.6 470.4L575.2 472.8L577.7 475.3L580.3 477.7L582.9 480.2L585.4 482.7L588.0 485.2L590.5 487.7L593.0 490.2L595.6 492.7L598.1 495.3L600.6 497.8L603.1 500.4L605.7 502.9L608.2 505.5L610.7 508.1L613.2 510.7L615.7 513.3M91.6 215.1L95.2 217.0L98.9 218.9L102.6 220.8L106.3 222.7L110.0 224.6L113.8 226.4L117.5 228.3L121.3 230.2L125.2 232.1L129.0 234.0L132.9 235.8L136.8 237.7L140.8 239.6L144.7 241.5L148.7 243.4L152.8 245.2L156.8 247.1L160.9 249.0L165.0 250.9L169.1 252.7L173.3 254.6L177.5 256.5L181.7 258.4L185.9 260.2L190.2 262.1L194.5 264.0L198.9 265.9L203.2 267.7L207.6 269.6L212.0 271.5L216.5 273.4L220.9 275.3L225.5 277.1L230.0 279.0L234.6 280.9L239.1 282.8L243.8 284.6L248.4 286.5L253.1 288.4L257.8 290.3L262.5 292.1L267.2 294.0L272.0 295.9L276.8 297.8L281.6 299.6L286.4 301.5L291.3 303.4L296.1 305.3L301.0 307.2L305.9 309.0L310.7 310.9L315.6 312.8L320.5 314.7L325.4 316.5L330.3 318.4L335.1 320.3L339.9 322.2L344.8 324.0L349.6 325.9L354.3 327.8L359.0 329.7L363.7 331.5L368.4 333.4L373.0 335.3L377.5 337.2L382.0 339.1L386.5 340.9L390.9 342.8L395.2 344.7L399.5 346.6L403.7 348.4L407.9 350.3L412.0 352.2L416.0 354.1L420.0 356.0L423.9 357.9L427.7 359.8L431.5 361.8L435.3 363.7L439.0 365.6L442.6 367.6L446.2 369.6L449.7 371.5L453.2 373.5L456.6 375.5L460.0 377.5L463.3 379.5L466.6 381.6L469.9 383.6L473.1 385.6L476.3 387.7L479.4 389.7L482.6 391.8L485.6 393.9L488.7 396.0L491.7 398.1L494.7 400.2L497.6 402.3L500.6 404.4L503.5 406.5L506.4 408.7L509.2 410.8L512.1 413.0L514.9 415.2L517.7 417.3L520.4 419.5L523.2 421.7L525.9 424.0L528.7 426.2L531.4 428.4L534.1 430.7L536.7 432.9L539.4 435.2L542.0 437.4L544.7 439.7L547.3 442.0L549.9 444.3L552.5 446.6L555.1 449.0L557.7 451.3L560.3 453.7L562.8 456.0L565.4 458.4L567.9 460.8L570.5 463.2L573.0 465.6L575.5 468.0L578.1 470.4L580.6 472.8L583.1 475.3L585.6 477.7L588.1 480.2L590.6 482.7L593.1 485.2L595.6 487.7L598.0 490.2L600.5 492.7L603.0 495.3L605.5 497.8L607.9 500.4L610.4 502.9L612.9 505.5L615.4 508.1L617.8 510.7L620.3 513.3M90.6 207.5L94.2 209.4L97.8 211.3L101.5 213.2L105.2 215.1L108.9 217.0L112.7 218.9L116.4 220.8L120.2 222.7L124.1 224.6L127.9 226.4L131.8 228.3L135.7 230.2L139.6 232.1L143.6 234.0L147.6 235.8L151.6 237.7L155.6 239.6L159.7 241.5L163.8 243.4L167.9 245.2L172.1 247.1L176.3 249.0L180.5 250.9L184.7 252.7L189.0 254.6L193.3 256.5L197.6 258.4L201.9 260.2L206.3 262.1L210.7 264.0L215.2 265.9L219.6 267.7L224.1 269.6L228.7 271.5L233.2 273.4L237.8 275.3L242.4 277.1L247.0 279.0L251.7 280.9L256.4 282.8L261.1 284.6L265.8 286.5L270.6 288.4L275.4 290.3L280.1 292.1L285.0 294.0L289.8 295.9L294.6 297.8L299.5 299.6L304.3 301.5L309.2 303.4L314.0 305.3L318.9 307.2L323.8 309.0L328.6 310.9L333.4 312.8L338.2 314.7L343.0 316.5L347.8 318.4L352.5 320.3L357.2 322.2L361.8 324.0L366.4 325.9L371.0 327.8L375.5 329.7L380.0 331.5L384.4 333.4L388.7 335.3L393.0 337.2L397.2 339.1L401.4 340.9L405.5 342.8L409.5 344.7L413.5 346.6L417.4 348.4L421.3 350.3L425.1 352.2L428.8 354.1L432.5 356.0L436.1 357.9L439.7 359.8L443.2 361.8L446.7 363.7L450.1 365.6L453.5 367.6L456.8 369.6L460.1 371.5L463.4 373.5L466.6 375.5L469.8 377.5L472.9 379.5L476.0 381.6L479.1 383.6L482.1 385.6L485.1 387.7L488.1 389.7L491.0 391.8L493.9 393.9L496.8 396.0L499.7 398.1L502.5 400.2L505.3 402.3L508.1 404.4L510.9 406.5L513.6 408.7L516.4 410.8L519.1 413.0L521.8 415.2L524.5 417.3L527.1 419.5L529.8 421.7L532.4 424.0L535.0 426.2L537.6 428.4L540.2 430.7L542.8 432.9L545.4 435.2L548.0 437.4L550.5 439.7L553.1 442.0L555.6 444.3L558.1 446.6L560.7 449.0L563.2 451.3L565.7 453.7L568.2 456.0L570.7 458.4L573.2 460.8L575.6 463.2L578.1 465.6L580.6 468.0L583.0 470.4L585.5 472.8L588.0 475.3L590.4 477.7L592.9 480.2L595.3 482.7L597.7 485.2L600.2 487.7L602.6 490.2L605.1 492.7L607.5 495.3L609.9 497.8L612.4 500.4L614.8 502.9L617.2 505.5L619.6 508.1L622.1 510.7L624.5 513.3" fill="none" stroke="#6868c8" stroke-width="1.05" stroke-dasharray="2.8 4.2"/></g><path d="M150.5 101.0V484.0M183.5 101.0V484.0M217.5 101.0V484.0M251.5 101.0V484.0M285.5 101.0V484.0M319.5 101.0V484.0M353.5 101.0V484.0M387.5 101.0V484.0M420.5 101.0V484.0M454.5 101.0V484.0M488.5 101.0V484.0M522.5 101.0V484.0M556.5 101.0V484.0M590.5 101.0V484.0M624.5 101.0V484.0M150.0 101.5H625.0M150.0 157.5H625.0M150.0 190.5H625.0M150.0 230.5H625.0M150.0 256.5H625.0M150.0 284.5H625.0M150.0 316.5H625.0M150.0 339.5H625.0M150.0 356.5H625.0M150.0 371.5H625.0M150.0 396.5H625.0M150.0 416.5H625.0M150.0 447.5H625.0M150.0 466.5H625.0M150.0 483.5H625.0M643.5 101.0V484.0M680.5 101.0V484.0M718.5 101.0V484.0M756.5 101.0V484.0M794.5 101.0V484.0M832.5 101.0V484.0M643.0 101.5H833.0M643.0 157.5H833.0M643.0 190.5H833.0M643.0 230.5H833.0M643.0 256.5H833.0M643.0 284.5H833.0M643.0 316.5H833.0M643.0 339.5H833.0M643.0 356.5H833.0M643.0 371.5H833.0M643.0 396.5H833.0M643.0 416.5H833.0M643.0 447.5H833.0M643.0 466.5H833.0M643.0 483.5H833.0" fill="none" stroke="#000" stroke-width="1" shape-rendering="crispEdges"/><path d="M150.0 484.0H625.0M643.0 484.0H833.0" stroke="#000" stroke-width="2" shape-rendering="crispEdges"/><text x="482" y="92" text-anchor="middle" letter-spacing="0.33">Stuve diagram - Temperature and Humidity against Log Pressure</text><text x="150" y="106.0" text-anchor="end" letter-spacing="0.4">10hP</text><text x="836.5" y="106.0" letter-spacing="0.55">31034m</text><text x="150" y="162.0" text-anchor="end" letter-spacing="0.4">20hP</text><text x="836.5" y="162.0" letter-spacing="0.55">26469m</text><text x="150" y="195.0" text-anchor="end" letter-spacing="0.4">30hP</text><text x="836.5" y="195.0" letter-spacing="0.55">23842m</text><text x="150" y="235.0" text-anchor="end" letter-spacing="0.4">50hP</text><text x="836.5" y="235.0" letter-spacing="0.55">20575m</text><text x="150" y="261.0" text-anchor="end" letter-spacing="0.4">70hP</text><text x="836.5" y="261.0" letter-spacing="0.55">18442m</text><text x="150" y="289.0" text-anchor="end" letter-spacing="0.4">100hP</text><text x="836.5" y="289.0" letter-spacing="0.55">16180m</text><text x="150" y="321.0" text-anchor="end" letter-spacing="0.4">150hP</text><text x="836.5" y="321.0" letter-spacing="0.55">13608m</text><text x="150" y="344.0" text-anchor="end" letter-spacing="0.4">200hP</text><text x="836.5" y="344.0" letter-spacing="0.55">11784m</text><text x="150" y="361.0" text-anchor="end" letter-spacing="0.4">250hP</text><text x="836.5" y="361.0" letter-spacing="0.55">10363m</text><text x="150" y="376.0" text-anchor="end" letter-spacing="0.4">300hP</text><text x="836.5" y="376.0" letter-spacing="0.55">9164m</text><text x="150" y="401.0" text-anchor="end" letter-spacing="0.4">400hP</text><text x="836.5" y="401.0" letter-spacing="0.55">7185m</text><text x="150" y="421.0" text-anchor="end" letter-spacing="0.4">500hP</text><text x="836.5" y="421.0" letter-spacing="0.55">5574m</text><text x="150" y="452.0" text-anchor="end" letter-spacing="0.4">700hP</text><text x="836.5" y="452.0" letter-spacing="0.55">3012m</text><text x="150" y="471.0" text-anchor="end" letter-spacing="0.4">850hP</text><text x="836.5" y="471.0" letter-spacing="0.55">1457m</text><text x="150" y="488.0" text-anchor="end" letter-spacing="0.4">1000hP</text><text x="152" y="115" fill="#cc1418" letter-spacing="0.3">Dew point &#176;C</text><text x="152" y="131" fill="#640a10" letter-spacing="0.3">Temp &#176;C</text><text x="645" y="115" fill="#ee8a1e" letter-spacing="0.55">Relative Humidity %</text><text x="150.0" y="499" text-anchor="middle" fill="#7a0c14" letter-spacing="0.5">-100&#176;</text><text x="183.9" y="499" text-anchor="middle" fill="#7a0c14" letter-spacing="0.5">-90&#176;</text><text x="217.7" y="499" text-anchor="middle" fill="#7a0c14" letter-spacing="0.5">-80&#176;</text><text x="251.6" y="499" text-anchor="middle" fill="#7a0c14" letter-spacing="0.5">-70&#176;</text><text x="285.4" y="499" text-anchor="middle" fill="#7a0c14" letter-spacing="0.5">-60&#176;</text><text x="319.3" y="499" text-anchor="middle" fill="#7a0c14" letter-spacing="0.5">-50&#176;</text><text x="353.1" y="499" text-anchor="middle" fill="#7a0c14" letter-spacing="0.5">-40&#176;</text><text x="387.0" y="499" text-anchor="middle" fill="#7a0c14" letter-spacing="0.5">-30&#176;</text><text x="420.9" y="499" text-anchor="middle" fill="#7a0c14" letter-spacing="0.5">-20&#176;</text><text x="454.7" y="499" text-anchor="middle" fill="#7a0c14" letter-spacing="0.5">-10&#176;</text><text x="488.6" y="499" text-anchor="middle" fill="#7a0c14" letter-spacing="0.5">0&#176;</text><text x="522.4" y="499" text-anchor="middle" fill="#7a0c14" letter-spacing="0.5">10&#176;</text><text x="556.3" y="499" text-anchor="middle" fill="#7a0c14" letter-spacing="0.5">20&#176;</text><text x="590.1" y="499" text-anchor="middle" fill="#7a0c14" letter-spacing="0.5">30&#176;</text><text x="624.0" y="499" text-anchor="middle" fill="#7a0c14" letter-spacing="0.5">40&#176;</text><text x="643.0" y="499" text-anchor="middle" fill="#ee8a1e" letter-spacing="0.5">0</text><text x="680.8" y="499" text-anchor="middle" fill="#ee8a1e" letter-spacing="0.5">20</text><text x="718.6" y="499" text-anchor="middle" fill="#ee8a1e" letter-spacing="0.5">40</text><text x="756.4" y="499" text-anchor="middle" fill="#ee8a1e" letter-spacing="0.5">60</text><text x="794.2" y="499" text-anchor="middle" fill="#ee8a1e" letter-spacing="0.5">80</text><text x="816.5" y="499" fill="#ee8a1e" letter-spacing="0.3">100%</text><path d="M171.3 319.5L180.6 320.0L193.1 321.1L196.3 325.8L200.9 328.4L213.4 329.7L221.3 333.6L224.4 335.9L223.6 343.8L227.5 346.9L235.3 348.4M237.0 348.8L241.6 348.8M244.0 349.2L249.4 349.2M263.4 350.0L272.8 350.3L296.3 351.6L302.5 353.1L305.6 355.5L304.0 357.8L296.3 358.7L274.0 358.9M268.0 359.0L272.0 359.0M263.0 359.2L265.0 359.2M260.0 359.3L261.5 359.3M257.0 359.3L258.5 359.3M255.6 359.5L246.0 359.5L240.0 360.6L241.6 363.3L246.3 367.2L252.5 370.6L265.0 375.0L272.8 378.1L275.9 382.8L285.3 388.3L294.7 393.7L299.4 398.4L305.6 401.6L311.9 402.3L319.7 405.0M326.7 405.4L333.7 405.4M338.4 407.2L343.4 410.3L348.9 411.1L366.9 416.2L387.2 418.1L399.7 421.2M388.7 422.5L399.7 422.5M399.7 424.8L404.4 424.8M409.8 425.2L411.4 425.2M419.2 425.6L423.1 428.3L433.7 429.2L438.7 430.6L447.5 433.4L447.3 441.6L444.2 443.9L462.2 446.2L449.7 447.5L448.9 454.8L440.0 458.1L430.6 459.1L419.7 459.4M418.0 462.5L430.6 462.5M435.3 463.7L443.1 463.7L449.4 467.2M452.5 468.0L460.3 468.0M462.7 468.7L466.6 468.7M396.0 462.0L416.0 462.2" fill="none" stroke="#f01010" stroke-width="2.2" stroke-linejoin="round"/><path d="M223.8 336V344M300 353.5L305 356M241 361L243 364M339.5 406.5L342.5 410M389 421H399" stroke="#f01010" stroke-width="3.4" stroke-linecap="round" fill="none"/><path d="M373.6 462H396" stroke="#f01010" stroke-width="1.8" stroke-dasharray="1.6 2.2"/><path d="M348 485.2h1.5M359 485.2h1.5M401 485.2h1.5M410 485.2h13M437.7 485.2h4.6M464 485.2h1.5" stroke="#f01010" stroke-width="1.4"/><path d="M269.7 307.0L281.4 312.5L281.4 315.6L277.5 318.0L274.4 322.7L286.1 328.9L280.6 333.6L283.7 338.3L296.2 343.0L306.4 347.7L308.0 350.8L319.7 356.2L324.4 358.6L327.5 361.7L340.0 368.0L352.8 373.6L387.2 389.2L420.0 401.7L435.6 409.5L454.4 419.7L455.9 425.9L466.9 433.7L485.6 442.3L488.7 447.0L507.5 458.0L511.1 460.2L513.2 468.7" fill="none" stroke="#6e0608" stroke-width="2.6" stroke-linejoin="round"/><path d="M512.8 466.5V469.5M488.4 445V448M455 420.5V423M307.5 349V351" stroke="#6e0608" stroke-width="4" stroke-linecap="round"/><path d="M488.4 470.3V475" stroke="#b01010" stroke-width="1.6"/><path d="M488 485.2h1.5M505.6 485.2h7.8" stroke="#6e0608" stroke-width="1.4"/><path d="M643.7 306.2L643.7 316.5L655.8 321.6L656.6 326.8L664.4 330.2L678.1 335.4L671.2 338.8L660.0 345.7L666.1 348.6L676.4 349.0M731.4 350.3L741.0 351.0M746.0 351.3L757.0 351.6M761.0 352.0L771.0 352.2M776.0 352.5L789.8 353.4M795.0 354.0L800.0 354.0M789.0 353.8L784.7 354.6L777.0 356.0L764.0 357.4M719.4 359.0L734.8 359.0M664.0 359.6L659.2 360.2L655.8 363.7L654.9 368.9L658.4 374.4L655.8 380.9L653.2 391.2L651.5 399.8L654.9 404.1L661.8 407.6L666.1 413.6L671.2 416.7L681.6 417.9L691.0 421.5M693.6 424.6L698.7 424.6M710.3 425.0L711.8 425.0M721.0 426.1L728.0 426.4M733.0 428.4L738.3 428.7M743.4 430.0L757.2 432.7L769.2 433.5L757.2 434.6L733.0 439.5L717.7 443.0L711.6 443.8L728.0 445.5M733.0 446.0L738.0 446.0M742.0 446.0L748.6 446.0M733.0 447.3L717.7 449.0L705.6 452.4L695.3 455.9L683.3 459.3L673.0 459.5M661.0 460.3L671.0 460.3M648.0 461.5L658.0 461.0M662.7 462.7L673.0 462.7M675.5 464.0L681.6 464.0L686.7 466.2L688.4 467.4L698.7 467.4M706.5 468.7L711.6 468.7" fill="none" stroke="#f0841c" stroke-width="2" stroke-linejoin="round"/><path d="M683 419.5L690 421.5M717 443.5H724M757 433H766" stroke="#f0841c" stroke-width="3.2" stroke-linecap="round"/><path d="M659.2 360.2L655.8 363.7L654.9 368.9L658.4 374.4L655.8 380.9L653.2 391.2L651.5 399.8" fill="none" stroke="#f0841c" stroke-width="2.8" stroke-linejoin="round"/><path d="M698.7 350H731.4M669.5 359.2H717.6M740 357.8H759" stroke="#f0841c" stroke-width="1.6" stroke-dasharray="1.6 2.4"/><path d="M643.7 317V400" stroke="#f0841c" stroke-width="1" stroke-dasharray="2 5" opacity=".7"/><path d="M643.7 455V459M643.7 468V474" stroke="#f0841c" stroke-width="1.4"/><path d="M644.6 485h3.4M652.3 485h3.5M662.7 485h1.5M667 485h4M676.4 485h1.5M685 485h2.6M691 485h1.5M708 485h1.5M771 485h1.5M779.5 485h1.5M791.6 485h4.3M832 485h1.5" stroke="#f0841c" stroke-width="1.6"/><path d="M908.7 310.4L882.6 306.2M885.5 306.7L881.4 298.8M890.5 307.5L886.3 299.6M895.4 308.2L891.2 300.4M900.3 309.0L898.4 305.3M908.7 317.9L882.2 316.5M885.2 316.7L880.3 309.3M890.2 316.9L885.3 309.6M895.2 317.2L890.2 309.8M900.2 317.5L895.2 310.1M908.7 325.2L882.2 324.3M885.2 324.4L880.1 317.1M890.2 324.5L885.1 317.2M895.2 324.7L890.1 317.4M900.2 324.9L895.1 317.6M908.7 332.5L882.2 331.6M885.2 331.7L880.1 324.4M890.2 331.8L885.1 324.5M895.2 332.0L890.1 324.7M900.2 332.2L895.1 324.9M908.7 339.7L882.3 337.4M885.3 337.6L880.6 330.1M890.3 338.1L885.6 330.5M895.3 338.5L890.5 331.0M900.2 339.0L895.5 331.4M908.7 348.6L882.2 347.9M885.2 348.0L880.0 340.7M890.2 348.1L885.0 340.9M895.2 348.3L890.0 341.0M900.2 348.4L895.0 341.1M908.7 356.2L882.4 353.5M885.3 353.8L880.8 346.1M890.3 354.3L885.7 346.7M895.3 354.8L890.7 347.2M900.3 355.3L898.1 351.7M909.1 362.6L887.9 352.3M890.6 353.6L886.4 344.0M895.1 355.8L890.9 346.2M899.6 358.0L895.3 348.4M904.1 360.2L902.4 356.3M909.1 370.3L887.9 360.0M890.6 361.3L886.4 351.7M895.1 363.5L890.9 353.9M899.6 365.7L895.3 356.1M909.1 376.7L888.6 365.3M891.2 366.8L887.4 357.0M895.6 369.2L891.8 359.4M900.0 371.6L896.2 361.8M909.1 383.7L888.1 373.0M890.8 374.4L886.7 364.7M895.3 376.7L891.2 367.0M899.7 378.9L898.1 375.1M909.1 390.2L888.4 379.1M891.0 380.5L887.1 370.8M895.4 382.9L891.5 373.1M899.8 385.2L898.3 381.3M909.1 397.4L887.9 387.1M890.6 388.4L886.4 378.8M895.1 390.6L890.9 381.0M909.0 405.2L887.7 395.3M890.4 396.6L886.0 387.0M895.0 398.7L890.5 389.2M909.0 413.0L887.7 403.1M890.4 404.4L886.0 394.8M895.0 406.5L890.5 397.0M909.1 421.3L888.6 409.9M891.2 411.4L887.4 401.6M895.6 413.8L894.1 409.9M909.4 429.3L890.4 415.5M892.8 417.3L890.2 407.1M896.8 420.2L895.8 416.2M909.0 438.4L887.7 428.5M890.4 429.8L886.0 420.2M895.0 431.9L893.2 428.1M911.5 445.0L908.2 429.8M908.9 432.7L913.8 423.5M912.0 454.0L910.9 438.5M911.1 441.5L913.6 438.1" fill="none" stroke="#000" stroke-width="1.05"/><g fill="none" stroke="#000" stroke-width="1.1"><circle cx="912.2" cy="310.9" r="3.5"/><circle cx="912.2" cy="318.1" r="3.5"/><circle cx="912.2" cy="325.3" r="3.5"/><circle cx="912.2" cy="332.6" r="3.5"/><circle cx="912.2" cy="340.0" r="3.5"/><circle cx="912.2" cy="348.7" r="3.5"/><circle cx="912.2" cy="356.6" r="3.5"/><circle cx="912.2" cy="364.1" r="3.5"/><circle cx="912.2" cy="371.8" r="3.5"/><circle cx="912.2" cy="378.4" r="3.5"/><circle cx="912.2" cy="385.3" r="3.5"/><circle cx="912.2" cy="391.8" r="3.5"/><circle cx="912.2" cy="398.9" r="3.5"/><circle cx="912.2" cy="406.7" r="3.5"/><circle cx="912.2" cy="414.5" r="3.5"/><circle cx="912.2" cy="423.0" r="3.5"/><circle cx="912.2" cy="431.4" r="3.5"/><circle cx="912.2" cy="439.9" r="3.5"/><circle cx="912.2" cy="448.4" r="3.5"/><circle cx="912.2" cy="457.5" r="3.5"/><circle cx="912.2" cy="466.0" r="3.5"/></g></svg></div>
<div id="status"><span class="abs" style="left:2px;top:2px">For Help, press F1</span><div class="abs" style="left:844px;top:1px;width:25px;height:16px;border:1px solid #c5c2b2;border-right-color:#fff;border-bottom-color:#fff"></div><div class="abs" style="left:872px;top:1px;width:28px;height:16px;border:1px solid #c5c2b2;border-right-color:#fff;border-bottom-color:#fff"></div><div class="abs" style="left:902px;top:1px;width:31px;height:16px;border:1px solid #c5c2b2;border-right-color:#fff;border-bottom-color:#fff"></div><svg class="abs" style="left:938px;top:5px" width="13" height="13"><path d="M12 1L1 12M12 5L5 12M12 9L9 12" stroke="#b8b4a4" stroke-width="1.5"/><path d="M13 2L2 13M13 6L6 13M13 10L10 13" stroke="#fff" stroke-width="1"/></svg></div>
</div>
<div id="task">
<div id="start"><svg class="abs" style="left:10px;top:6px" width="20" height="19" viewBox="0 0 20 19"><path d="M2 2Q5 0 9 2L8 8Q5 6 1 8Z" fill="#e8502a"/><path d="M10.5 2.5Q14 4 18 2L17 8Q13 10 9.5 8.5Z" fill="#7ac043"/><path d="M0.8 9.5Q5 7.5 7.8 9.5L6.8 16Q3 14 0 16Z" fill="#3a8ee8"/><path d="M9.3 10Q13 11.5 16.8 9.5L15.8 16Q12 17.5 8.3 16Z" fill="#f8c62a"/></svg><div class="abs" style="left:34px;top:3px;color:#fff;font-size:18px;line-height:24px;font-weight:bold;font-style:italic;letter-spacing:-0.2px;text-shadow:1px 1px 2px #1a4a1a">start</div></div>
<div class="abs" style="left:106px;top:11px;width:5px;height:18px;background:repeating-linear-gradient(to bottom,#1a48b0 0,#1a48b0 2px,transparent 2px,transparent 4px);opacity:.8"></div><div class="tbn" style="left:117px;width:130px"><div class="abs" style="left:9px;top:3px;width:16px;height:16px"><svg width="16" height="16"><rect x="2" y="1" width="12" height="9" fill="#d8d8d0" stroke="#222"/><rect x="4" y="3" width="8" height="5" fill="#103010"/><path d="M5 6L7 4L9 7L11 5" stroke="#40e040" fill="none" stroke-width=".8"/><rect x="1" y="11" width="14" height="4" fill="#e8e8e0" stroke="#222"/></svg></div><span class="abs" style="left:28px;top:0">Windows Task ...</span></div>
<div class="tbn" style="left:250px;width:130px"><div class="abs" style="left:9px;top:3px;width:16px;height:16px"><svg width="16" height="16"><path d="M1 3H6L8 5H15V14H1Z" fill="#e8c050" stroke="#8a6a10"/><path d="M1 7H15V14H1Z" fill="#f8e088" stroke="#8a6a10"/></svg></div><span class="abs" style="left:28px;top:0;color:#f4d488;font-weight:bold">3</span><span class="abs" style="left:38px;top:0">Windows Ex...</span><svg class="abs" style="right:6px;top:10px" width="7" height="4"><path d="M0 0H7L3.5 4Z" fill="#fff"/></svg></div>
<div class="tbn" style="left:383px;width:131px"><div class="abs" style="left:9px;top:3px;width:16px;height:16px"><svg width="16" height="16"><circle cx="8" cy="8" r="7" fill="#fff" stroke="#222" stroke-width="1.5"/><path d="M8 3.5V8H11" stroke="#000" stroke-width="1.4" fill="none"/></svg></div><span class="abs" style="left:28px;top:0">Set Timer Resol...</span></div>
<div class="tbn" style="left:517px;width:130px"><div class="abs" style="left:9px;top:3px;width:16px;height:16px"><svg width="16" height="16"><path d="M3 2H12L14 14H5Z" fill="#a8d8f8" stroke="#4888b8"/><path d="M5 1V3M8 1V3M11 1V3" stroke="#246"/></svg></div><span class="abs" style="left:28px;top:0;color:#f4d488;font-weight:bold">2</span><span class="abs" style="left:38px;top:0">Notepad</span><svg class="abs" style="right:6px;top:10px" width="7" height="4"><path d="M0 0H7L3.5 4Z" fill="#fff"/></svg></div>
<div class="tbn" style="left:649px;width:131px"><div class="abs" style="left:9px;top:3px;width:16px;height:16px"><svg width="16" height="16"><ellipse cx="8" cy="9" rx="7" ry="5.5" fill="#e0d4b8"/><path d="M1 4L4 1L6 5ZM10 5L13 1L15 5Z" fill="#3a2a1a"/><path d="M1.5 8Q8 4 14.5 8Q13 11 8 10.5Q3 11 1.5 8Z" fill="#3a2a1a"/><ellipse cx="8" cy="12" rx="1.6" ry="1.1" fill="#111"/></svg></div><span class="abs" style="left:28px;top:0">Open Thread &ndash; ...</span></div>
<div class="tbn" style="left:782px;width:130px"><div class="abs" style="left:9px;top:3px;width:16px;height:16px"><svg width="16" height="16"><rect x="1" y="0.5" width="14" height="15" rx="2" fill="#f4f0e4" stroke="#b8b098"/><path d="M8 2Q6 5 8 6Q10 7.5 8 9.5" stroke="#e06020" stroke-width="1.3" fill="none"/><path d="M4 11Q8 13 12 11M5 13.5Q8 14.8 11 13.5" stroke="#4a6aa8" stroke-width="1.2" fill="none"/></svg></div><span class="abs" style="left:28px;top:0;color:#f4d488;font-weight:bold">2</span><span class="abs" style="left:38px;top:0">Java(TM) Pl...</span><svg class="abs" style="right:6px;top:10px" width="7" height="4"><path d="M0 0H7L3.5 4Z" fill="#fff"/></svg></div>
<div class="tbn act" style="left:914px;width:133px"><div class="abs" style="left:9px;top:3px;width:16px;height:16px"><svg width="16" height="16"><rect width="16" height="7" fill="#2848c8"/><rect y="7" width="16" height="9" fill="#b0b0b0"/><path d="M8 3V13M3 7H13" stroke="#d8d8d8" stroke-width="2"/><circle cx="8" cy="3.5" r="2" fill="#e8e0d0"/></svg></div><span class="abs" style="left:28px;top:0;color:#f4d488;font-weight:bold">3</span><span class="abs" style="left:38px;top:0">SondeMonitor</span><svg class="abs" style="right:6px;top:10px" width="7" height="4"><path d="M0 0H7L3.5 4Z" fill="#fff"/></svg></div>
<div id="tray"><svg class="abs" style="left:0;top:0" width="218" height="30" viewBox="1062 740.3 218 30"><rect x="1072" y="746" width="9" height="8" fill="#a8b8d8" stroke="#334"/><rect x="1076" y="750" width="9" height="8" fill="#c8d0e8" stroke="#334"/><path d="M1078 754L1086 761M1086 754L1078 761" stroke="#e02020" stroke-width="2"/><circle cx="1094" cy="749" r="4.5" fill="#fff" stroke="#102080" stroke-width="1.8"/><circle cx="1099" cy="756" r="5" fill="#222"/><path d="M1097 753V758M1100 753V758" stroke="#fff" stroke-width="1.4"/><rect x="1110" y="746" width="13" height="13" fill="#0a7a1a" stroke="#d8e8d8" stroke-width="1.5"/><path d="M1113 747V759M1116 747V759M1119 747V759M1110 750H1123M1110 753H1123M1110 756H1123" stroke="#044a0c" stroke-width="0.8"/><circle cx="1134" cy="752" r="6.5" fill="#909090" stroke="#404040"/><circle cx="1133" cy="751" r="3" fill="#303030"/><path d="M1139 757Q1142 755 1142 750" stroke="#8af" fill="none"/><path d="M1153 745L1158 759H1148Z" fill="#f08010"/><path d="M1150.5 753H1155.5M1149.5 756.5H1156.5" stroke="#fff" stroke-width="1.6"/><rect x="1146" y="759" width="14" height="2.5" fill="#d06008"/><circle cx="1170" cy="749" r="3" fill="#48a838"/><path d="M1165 759Q1170 750 1175 759Z" fill="#48a838"/><circle cx="1176" cy="748" r="2.5" fill="#e8c048"/><circle cx="1175" cy="758" r="3.8" fill="#e02020"/><path d="M1173.3 756.3L1176.7 759.7M1176.7 756.3L1173.3 759.7" stroke="#fff" stroke-width="1.2"/><path d="M1190 745Q1186 747 1183 746Q1182 757 1190 761Q1198 757 1197 746Q1194 747 1190 745Z" fill="#d82020" stroke="#e8b8b8"/><path d="M1187.5 750.5L1192.5 755.5M1192.5 750.5L1187.5 755.5" stroke="#fff" stroke-width="1.7"/><rect x="1203" y="747" width="9" height="7" fill="#b8c8d8" stroke="#445"/><path d="M1204 745L1212 745" stroke="#30c030" stroke-width="2"/><rect x="1201" y="755" width="12" height="3" fill="#889"/><path d="M1207 754L1214 761M1214 754L1207 761" stroke="#e02020" stroke-width="2"/></svg><div class="abs" style="left:161px;top:7px;color:#fff;font-size:11px;line-height:14px;white-space:nowrap;letter-spacing:0.1px">5:49 AM</div></div></div>
</div>
</body></html>
